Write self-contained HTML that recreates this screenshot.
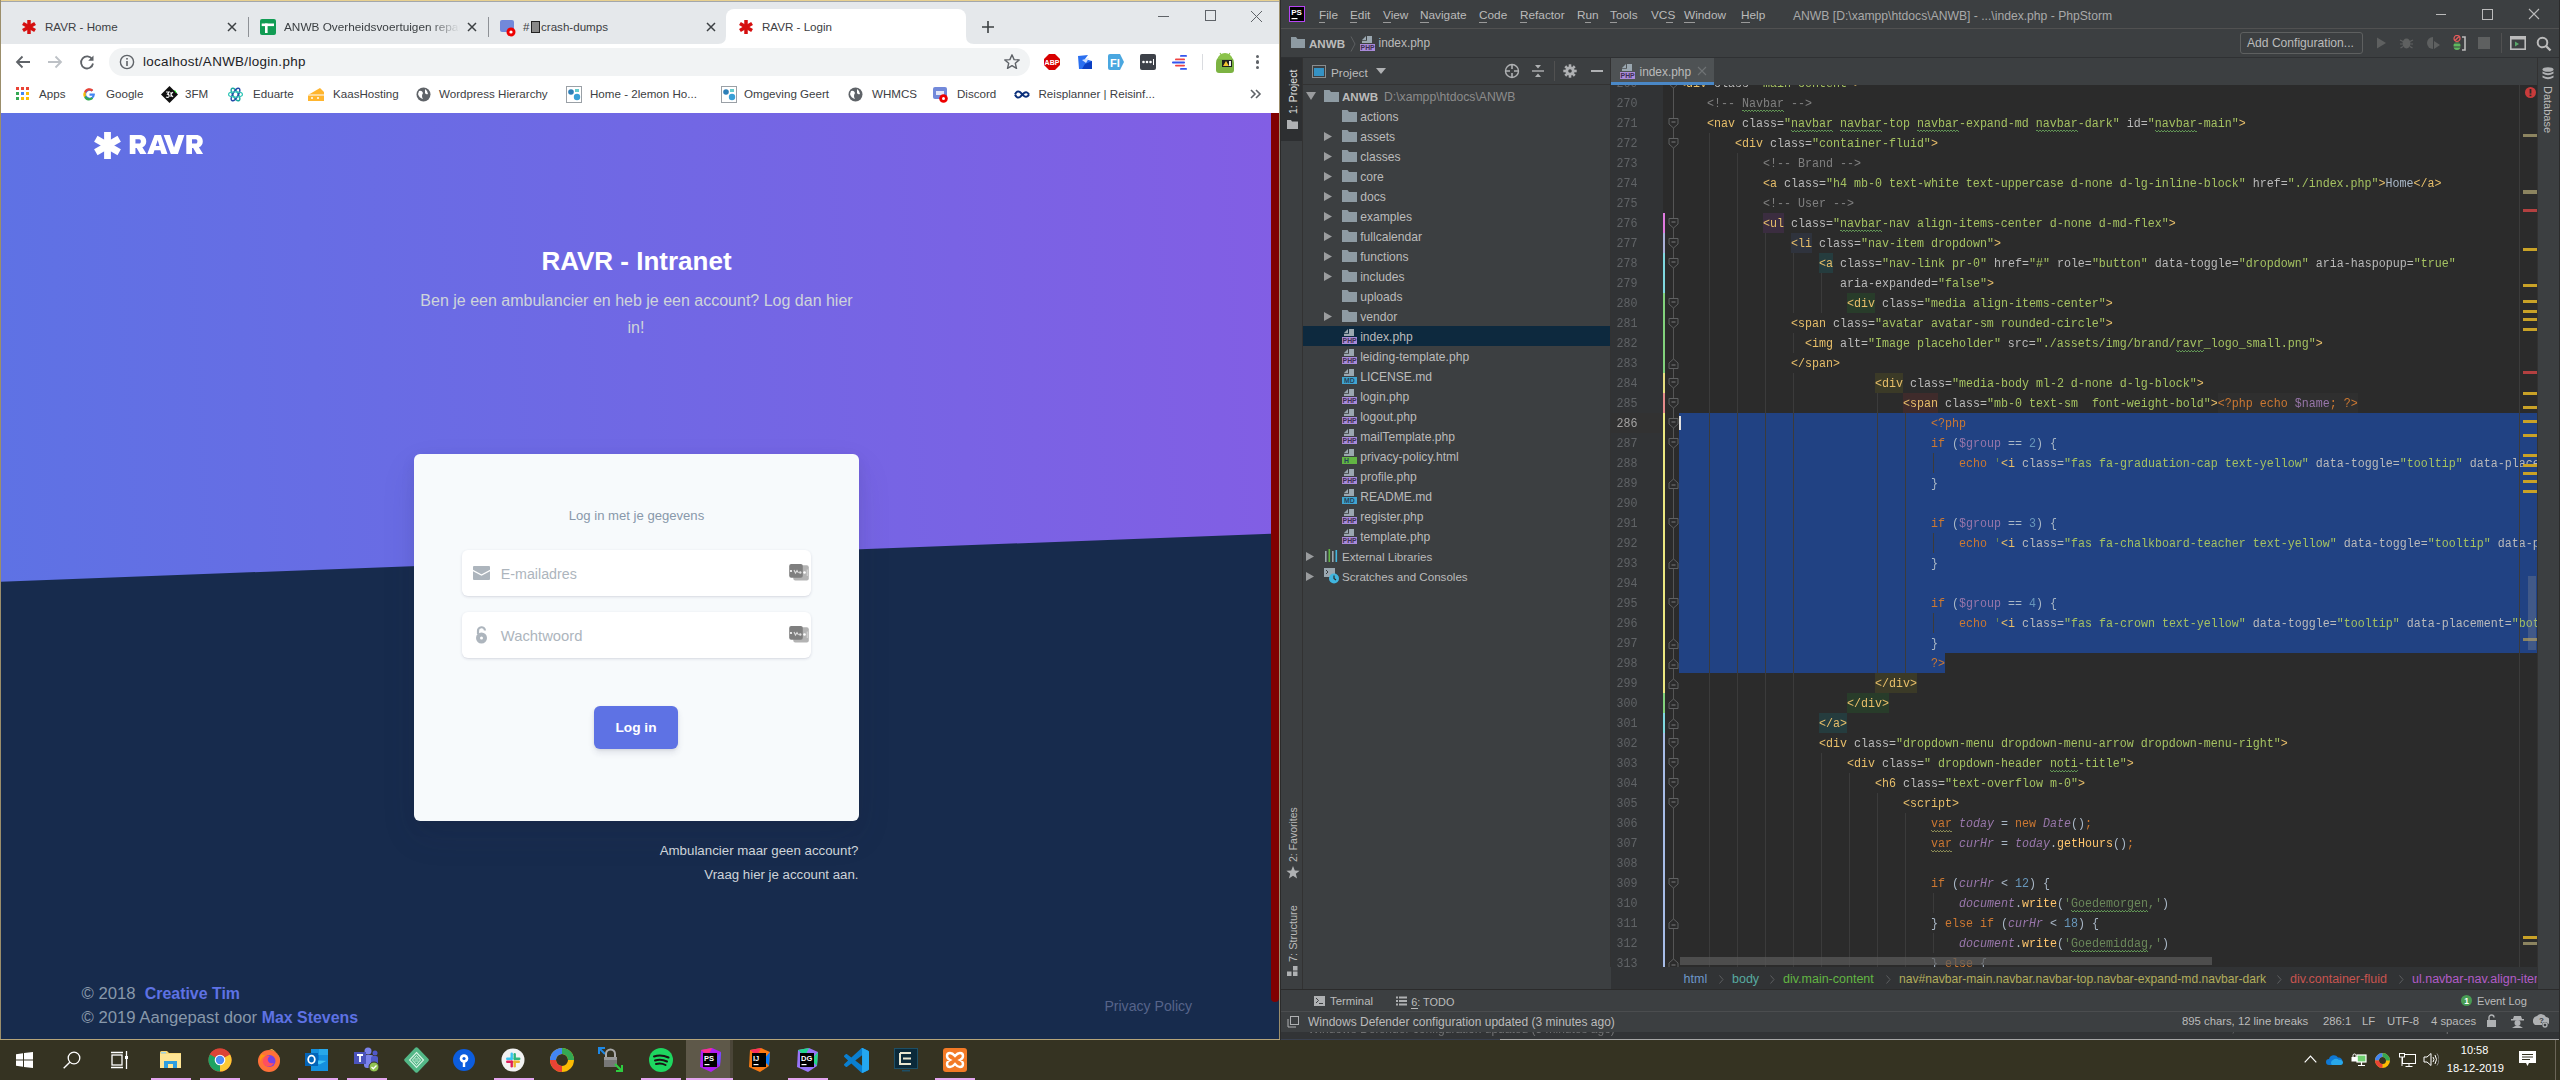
<!DOCTYPE html><html><head><meta charset="utf-8"><style>html,body{margin:0;padding:0;width:2560px;height:1080px;overflow:hidden;position:relative;background:#3a3428}body div{position:absolute}body *{box-sizing:border-box}</style></head><body>
<div style="left:0px;top:0px;width:1280px;height:1040px;background:#e5e8eb;"></div>
<div style="left:0px;top:0px;width:1280px;height:1px;background:#e8d08f;"></div>
<div style="left:1px;top:1px;width:1278px;height:1px;background:#a3a7ab;"></div>
<div style="left:0px;top:0px;width:1px;height:1040px;background:#9b8e6b;"></div>
<div style="left:1279px;top:0px;width:1px;height:1040px;background:#9b8e6b;"></div>
<div style="left:0px;top:1039px;width:1280px;height:1px;background:#b6a57a;"></div>
<div style="left:1px;top:2px;width:1278px;height:42px;background:#e5e8eb;"></div>
<div style="left:1px;top:44px;width:1278px;height:69px;background:#ffffff;"></div>
<svg style="position:absolute;left:22px;top:20px" width="14" height="14" viewBox="-7 -7 14 14"><rect x="-1.75" y="-7" width="3.5" height="14" fill="#d50f0f" transform="rotate(0)"/><rect x="-1.75" y="-7" width="3.5" height="14" fill="#d50f0f" transform="rotate(60)"/><rect x="-1.75" y="-7" width="3.5" height="14" fill="#d50f0f" transform="rotate(120)"/></svg>
<svg style="position:absolute;left:260px;top:19px;" width="16" height="16" viewBox="0 0 16 16"><rect x="0" y="0" width="16" height="16" rx="2" fill="#119c54"/><rect x="1.7" y="4.5" width="12.3" height="2.6" fill="#fff"/><rect x="5" y="4.5" width="2.6" height="9.5" fill="#fff"/></svg>
<svg style="position:absolute;left:499px;top:19px;" width="18" height="18" viewBox="0 0 18 18"><rect x="1" y="1" width="14" height="12" rx="2" fill="#7289da"/><circle cx="12" cy="13" r="4.5" fill="#e00"/><circle cx="12" cy="13" r="1.6" fill="#fff"/></svg>
<div style="left:45px;top:21.18px;font:normal 11.6px/11.6px 'Liberation Sans', sans-serif;color:#3c4043;white-space:pre;">RAVR - Home</div>
<div style="left:284px;top:19px;width:190px;height:16px;overflow:hidden;font:11.8px/16px 'Liberation Sans',sans-serif;color:#3c4043;white-space:pre;-webkit-mask-image:linear-gradient(90deg,#000 145px,transparent 176px)">ANWB Overheidsvoertuigen reparaties</div>
<div style="left:523px;top:21.18px;font:normal 11.6px/11.6px 'Liberation Sans', sans-serif;color:#3c4043;white-space:pre;">#</div>
<div style="left:531px;top:21px;width:9px;height:12px;background:#333;border:1px solid #222;background:#888"></div>
<div style="left:541px;top:21.18px;font:normal 11.6px/11.6px 'Liberation Sans', sans-serif;color:#3c4043;white-space:pre;">crash-dumps</div>
<svg style="position:absolute;left:226px;top:21px;" width="12" height="12" viewBox="0 0 12 12"><path d="M2 2L10 10M10 2L2 10" stroke="#3c4043" stroke-width="1.5"/></svg>
<svg style="position:absolute;left:466px;top:21px;" width="12" height="12" viewBox="0 0 12 12"><path d="M2 2L10 10M10 2L2 10" stroke="#3c4043" stroke-width="1.5"/></svg>
<svg style="position:absolute;left:705px;top:21px;" width="12" height="12" viewBox="0 0 12 12"><path d="M2 2L10 10M10 2L2 10" stroke="#3c4043" stroke-width="1.5"/></svg>
<svg style="position:absolute;left:944px;top:21px;" width="12" height="12" viewBox="0 0 12 12"><path d="M2 2L10 10M10 2L2 10" stroke="#3c4043" stroke-width="1.5"/></svg>
<div style="left:248px;top:17px;width:1px;height:20px;background:#8e9196;"></div>
<div style="left:488px;top:17px;width:1px;height:20px;background:#8e9196;"></div>
<div style="left:726px;top:9px;width:240px;height:36px;background:#fff;border-radius:8px 8px 0 0"></div>
<svg style="position:absolute;left:718px;top:36px;" width="8" height="8" viewBox="0 0 8 8"><path d="M0 8 Q8 8 8 0 L8 8Z" fill="#fff"/></svg>
<svg style="position:absolute;left:966px;top:36px;" width="8" height="8" viewBox="0 0 8 8"><path d="M8 8 Q0 8 0 0 L0 8Z" fill="#fff"/></svg>
<svg style="position:absolute;left:738.5px;top:20px" width="14" height="14" viewBox="-7 -7 14 14"><rect x="-1.75" y="-7" width="3.5" height="14" fill="#d50f0f" transform="rotate(0)"/><rect x="-1.75" y="-7" width="3.5" height="14" fill="#d50f0f" transform="rotate(60)"/><rect x="-1.75" y="-7" width="3.5" height="14" fill="#d50f0f" transform="rotate(120)"/></svg>
<div style="left:762px;top:21.18px;font:normal 11.6px/11.6px 'Liberation Sans', sans-serif;color:#3c4043;white-space:pre;">RAVR - Login</div>
<svg style="position:absolute;left:981px;top:20px;" width="14" height="14" viewBox="0 0 14 14"><path d="M7 1V13M1 7H13" stroke="#3c4043" stroke-width="1.6"/></svg>
<div style="left:1158px;top:16px;width:11px;height:1px;background:#5f6368;"></div>
<div style="left:1205px;top:10px;width:11px;height:11px;background:transparent;border:1px solid #5f6368"></div>
<svg style="position:absolute;left:1250px;top:10px;" width="13" height="13" viewBox="0 0 13 13"><path d="M1 1L12 12M12 1L1 12" stroke="#5f6368" stroke-width="1"/></svg>
<svg style="position:absolute;left:14px;top:54px;" width="18" height="16" viewBox="0 0 18 16"><path d="M16 8H3M8.5 2.5L3 8L8.5 13.5" stroke="#5f6368" stroke-width="1.8" fill="none"/></svg>
<svg style="position:absolute;left:46px;top:54px;" width="18" height="16" viewBox="0 0 18 16"><path d="M2 8H15M9.5 2.5L15 8L9.5 13.5" stroke="#bdc1c6" stroke-width="1.8" fill="none"/></svg>
<svg style="position:absolute;left:79px;top:54px;" width="17" height="17" viewBox="0 0 17 17"><path d="M13.2 5.3A6 6 0 1 0 14 9.5" stroke="#5f6368" stroke-width="1.8" fill="none"/><path d="M14.5 1.5V6.8H9.2Z" fill="#5f6368"/></svg>
<div style="left:109px;top:48px;width:921px;height:28px;background:#f1f3f4;border-radius:14px"></div>
<svg style="position:absolute;left:119px;top:54px;" width="16" height="16" viewBox="0 0 16 16"><circle cx="8" cy="8" r="6.6" stroke="#5f6368" stroke-width="1.4" fill="none"/><rect x="7.2" y="7" width="1.6" height="5" fill="#5f6368"/><rect x="7.2" y="4" width="1.6" height="1.6" fill="#5f6368"/></svg>
<div style="left:143px;top:55.16px;font:normal 13.4px/13.4px 'Liberation Sans', sans-serif;color:#202124;white-space:pre;letter-spacing:0.33px">localhost/ANWB/login.php</div>
<svg style="position:absolute;left:1003px;top:53px;" width="18" height="18" viewBox="0 0 18 18"><path d="M9 1.8L11.1 6.6L16.2 7L12.3 10.3L13.5 15.3L9 12.6L4.5 15.3L5.7 10.3L1.8 7L6.9 6.6Z" stroke="#5f6368" stroke-width="1.4" fill="none" stroke-linejoin="round"/></svg>
<svg style="position:absolute;left:1044px;top:54px;" width="16" height="16" viewBox="0 0 16 16"><path d="M5 0H11L16 5V11L11 16H5L0 11V5Z" fill="#d80000"/><text x="8" y="11" font-family="Liberation Sans" font-weight="bold" font-size="7" fill="#fff" text-anchor="middle">ABP</text></svg>
<svg style="position:absolute;left:1077px;top:54px;" width="16" height="16" viewBox="0 0 16 16"><path d="M1 2L11 1L8 5L15 7V15H2Z" fill="#2a6ff0"/><path d="M5 6L12 4L9 9Z" fill="#cfe0ff"/><path d="M8 10L15 7V15H5Z" fill="#0b3fc2"/></svg>
<svg style="position:absolute;left:1108px;top:54px;" width="17" height="16" viewBox="0 0 17 16"><path d="M0 2Q0 0 2 0H12L16 8L12 16H2Q0 16 0 14Z" fill="#4aa7e0"/><text x="2" y="12.5" font-family="Liberation Sans" font-weight="bold" font-size="11" fill="#fff">FI</text></svg>
<svg style="position:absolute;left:1140px;top:54px;" width="16" height="16" viewBox="0 0 16 16"><rect width="16" height="16" rx="2" fill="#3d4149"/><circle cx="3.5" cy="8" r="1.3" fill="#fff"/><circle cx="7" cy="8" r="1.3" fill="#fff"/><circle cx="10.5" cy="8" r="1.3" fill="#fff"/><rect x="13" y="5" width="1" height="6" fill="#fff"/></svg>
<svg style="position:absolute;left:1172px;top:54px;" width="16" height="16" viewBox="0 0 16 16"><rect x="8" y="1" width="7" height="1.8" rx=".9" fill="#3355ee"/><rect x="3" y="4.5" width="10" height="1.8" rx=".9" fill="#ee4444"/><rect x="0" y="7.6" width="13" height="1.8" rx=".9" fill="#3355ee"/><rect x="3" y="10.7" width="10" height="1.8" rx=".9" fill="#ee4444"/><rect x="8" y="14" width="7" height="1.8" rx=".9" fill="#3355ee"/></svg>
<div style="left:1202px;top:54px;width:1px;height:16px;background:#dadce0;"></div>
<svg style="position:absolute;left:1214px;top:50px;" width="22" height="24" viewBox="0 0 22 24"><path d="M2 13A9 9 0 0 1 20 13V20A3 3 0 0 1 17 23H5A3 3 0 0 1 2 20Z" fill="#7cb342"/><path d="M4 9A7 6 0 0 1 18 9Z" fill="#8bc34a"/><path d="M6 3L8 6M16 3L14 6" stroke="#8bc34a" stroke-width="1.2"/><rect x="8" y="10" width="10" height="7" fill="#1e1e1e"/><path d="M9 16L12 11L15 16Z" fill="#f2c230"/><rect x="15" y="11" width="2" height="5" fill="#eee"/></svg>
<div style="left:1255.5px;top:54.9px;width:3.2px;height:3.2px;border-radius:50%;background:#5f6368"></div>
<div style="left:1255.5px;top:60.4px;width:3.2px;height:3.2px;border-radius:50%;background:#5f6368"></div>
<div style="left:1255.5px;top:65.9px;width:3.2px;height:3.2px;border-radius:50%;background:#5f6368"></div>
<div style="left:16px;top:87px;width:3px;height:3px;background:#ea4335;"></div>
<div style="left:21px;top:87px;width:3px;height:3px;background:#ea4335;"></div>
<div style="left:26px;top:87px;width:3px;height:3px;background:#ea4335;"></div>
<div style="left:16px;top:92px;width:3px;height:3px;background:#34a853;"></div>
<div style="left:21px;top:92px;width:3px;height:3px;background:#4285f4;"></div>
<div style="left:26px;top:92px;width:3px;height:3px;background:#fbbc05;"></div>
<div style="left:16px;top:97px;width:3px;height:3px;background:#34a853;"></div>
<div style="left:21px;top:97px;width:3px;height:3px;background:#fbbc05;"></div>
<div style="left:26px;top:97px;width:3px;height:3px;background:#fbbc05;"></div>
<div style="left:39px;top:87.98px;font:normal 11.6px/11.6px 'Liberation Sans', sans-serif;color:#3c4043;white-space:pre;">Apps</div>
<svg style="position:absolute;left:83px;top:88px;" width="13" height="13" viewBox="0 0 13 13"><path d="M11.8 5.5H6.5V7.7H9.6A3.3 3.3 0 1 1 8.7 3.6L10.2 2.1A5.4 5.4 0 1 0 11.9 6.5Z" fill="#4285f4"/><path d="M1.1 3.7L3 5A3.3 3.3 0 0 1 8.7 3.6L10.2 2.1A5.4 5.4 0 0 0 1.1 3.7Z" fill="#ea4335"/><path d="M1.1 9.3L3 8A3.3 3.3 0 0 1 3 5L1.1 3.7A5.4 5.4 0 0 0 1.1 9.3Z" fill="#fbbc05"/><path d="M1.1 9.3A5.4 5.4 0 0 0 10.2 10.5L8.4 9.2A3.3 3.3 0 0 1 3 8Z" fill="#34a853"/></svg>
<div style="left:106px;top:87.98px;font:normal 11.6px/11.6px 'Liberation Sans', sans-serif;color:#3c4043;white-space:pre;">Google</div>
<svg style="position:absolute;left:161px;top:86px;" width="17" height="17" viewBox="0 0 17 17"><path d="M8.5 0L17 8.5L8.5 17L0 8.5Z" fill="#111"/><path d="M5 6H8L6.5 8.2Q8.5 8.5 8 10.5Q7 12 5 11" stroke="#fff" stroke-width="1.2" fill="none"/><path d="M10 6V11M10 8.5L12 6M10 8.5L12 11" stroke="#fff" stroke-width="1.1" fill="none"/><path d="M13.5 4L15.5 7" stroke="#3f3" stroke-width="1"/></svg>
<div style="left:185px;top:87.98px;font:normal 11.6px/11.6px 'Liberation Sans', sans-serif;color:#3c4043;white-space:pre;">3FM</div>
<svg style="position:absolute;left:228px;top:87px;" width="15" height="15" viewBox="0 0 15 15"><ellipse cx="7.5" cy="7.5" rx="7" ry="2.6" transform="rotate(60 7.5 7.5)" stroke="#1aa9a0" stroke-width="1.5" fill="none"/><ellipse cx="7.5" cy="7.5" rx="7" ry="2.6" transform="rotate(-60 7.5 7.5)" stroke="#2448a8" stroke-width="1.5" fill="none"/><ellipse cx="7.5" cy="7.5" rx="7" ry="2.6" stroke="#35c7b8" stroke-width="1.3" fill="none"/></svg>
<div style="left:253px;top:87.98px;font:normal 11.6px/11.6px 'Liberation Sans', sans-serif;color:#3c4043;white-space:pre;">Eduarte</div>
<svg style="position:absolute;left:307px;top:87px;" width="18" height="15" viewBox="0 0 18 15"><path d="M1 8L13 1L17 5V14H1Z" fill="#ffb52e"/><path d="M1 8H17" stroke="#fff" stroke-width="1"/><circle cx="5" cy="11" r="1" fill="#fff"/><circle cx="11" cy="11" r="1" fill="#fff"/></svg>
<div style="left:333px;top:87.98px;font:normal 11.6px/11.6px 'Liberation Sans', sans-serif;color:#3c4043;white-space:pre;">KaasHosting</div>
<svg style="position:absolute;left:416px;top:87px;" width="15" height="15" viewBox="0 0 15 15"><circle cx="7.5" cy="7.5" r="7" fill="#5f6368"/><path d="M3 4Q6 3 7 6Q5 9 7 12Q3 11 2 7Z M9 2Q12 4 12 7Q10 8 9 6Z" fill="#fff"/></svg>
<div style="left:439px;top:87.98px;font:normal 11.6px/11.6px 'Liberation Sans', sans-serif;color:#3c4043;white-space:pre;">Wordpress Hierarchy</div>
<svg style="position:absolute;left:566px;top:86px;" width="16" height="17" viewBox="0 0 16 17"><rect x="0.5" y="0.5" width="15" height="16" fill="#fff" stroke="#9aa0a6"/><circle cx="5" cy="6" r="2.8" fill="#2d7fb8"/><circle cx="11" cy="11" r="3.2" fill="#39a0d6"/><rect x="9" y="3" width="4" height="3" fill="#6cc"/></svg>
<svg style="position:absolute;left:721px;top:86px;" width="16" height="17" viewBox="0 0 16 17"><rect x="0.5" y="0.5" width="15" height="16" fill="#fff" stroke="#9aa0a6"/><circle cx="5" cy="6" r="2.8" fill="#2d7fb8"/><circle cx="11" cy="11" r="3.2" fill="#39a0d6"/><rect x="9" y="3" width="4" height="3" fill="#6cc"/></svg>
<div style="left:590px;top:87.98px;font:normal 11.6px/11.6px 'Liberation Sans', sans-serif;color:#3c4043;white-space:pre;">Home - 2lemon Ho...</div>
<div style="left:744px;top:87.98px;font:normal 11.6px/11.6px 'Liberation Sans', sans-serif;color:#3c4043;white-space:pre;">Omgeving Geert</div>
<svg style="position:absolute;left:848px;top:87px;" width="15" height="15" viewBox="0 0 15 15"><circle cx="7.5" cy="7.5" r="7" fill="#5f6368"/><path d="M3 4Q6 3 7 6Q5 9 7 12Q3 11 2 7Z M9 2Q12 4 12 7Q10 8 9 6Z" fill="#fff"/></svg>
<div style="left:872px;top:87.98px;font:normal 11.6px/11.6px 'Liberation Sans', sans-serif;color:#3c4043;white-space:pre;">WHMCS</div>
<svg style="position:absolute;left:933px;top:87px;" width="16" height="16" viewBox="0 0 16 16"><rect x="0" y="0" width="14" height="12" rx="2" fill="#7289da"/><path d="M3 4H11V8H3Z" fill="#fff" opacity=".8"/><circle cx="10.5" cy="11.5" r="4.3" fill="#e00"/><circle cx="10.5" cy="11.5" r="1.5" fill="#fff"/></svg>
<div style="left:957px;top:87.98px;font:normal 11.6px/11.6px 'Liberation Sans', sans-serif;color:#3c4043;white-space:pre;">Discord</div>
<svg style="position:absolute;left:1014px;top:89px;" width="16" height="11" viewBox="0 0 16 11"><path d="M1 5.5Q3 1 6 3L10 7Q13 9 15 5.5M1 5.5Q3 10 6 8L10 4Q13 2 15 5.5" stroke="#0a2f7a" stroke-width="2" fill="none"/></svg>
<div style="left:1038.5px;top:87.98px;font:normal 11.6px/11.6px 'Liberation Sans', sans-serif;color:#3c4043;white-space:pre;">Reisplanner | Reisinf...</div>
<svg style="position:absolute;left:1250px;top:89px;" width="12" height="10" viewBox="0 0 12 10"><path d="M1 1L5 5L1 9M6 1L10 5L6 9" stroke="#5f6368" stroke-width="1.6" fill="none"/></svg>
<div style="left:1px;top:113px;width:1270px;height:470px;background:linear-gradient(87deg,#5e72e4 0%,#825ee4 100%)"></div>
<div style="left:1px;top:582px;width:1270px;height:457px;background:#172b4d;"></div>
<svg style="position:absolute;left:1px;top:533px;" width="1270" height="50" viewBox="0 0 1270 50"><polygon points="1270,0.8 1270,50 0,50 0,48.7" fill="#172b4d"/></svg>
<div style="left:1271px;top:113px;width:8px;height:926px;background:#172b4d;"></div>
<div style="left:1271px;top:113px;width:8px;height:889px;background:#800000;border-radius:0 0 4px 4px"></div>
<svg style="position:absolute;left:94px;top:132px" width="27" height="27" viewBox="-13.5 -13.5 27 27"><rect x="-3.4" y="-13.5" width="6.8" height="27" fill="#fff" transform="rotate(0)"/><rect x="-3.4" y="-13.5" width="6.8" height="27" fill="#fff" transform="rotate(60)"/><rect x="-3.4" y="-13.5" width="6.8" height="27" fill="#fff" transform="rotate(120)"/></svg>
<svg style="position:absolute;left:129px;top:135px;" width="76" height="20" viewBox="0 0 76 20"><g fill="#fff" fill-rule="evenodd"><path transform="translate(0.75,0)" d="M0,0 H9.8 C14,0 16.5,2.6 16.5,6.4 C16.5,9.2 15,11.3 12.6,12.3 L16.8,19 H10.4 L6.9,13.1 H5.7 V19 H0 Z M5.7,4.3 H9.4 C10.6,4.3 11.1,5.2 11.1,6.4 C11.1,7.6 10.6,8.6 9.4,8.6 H5.7 Z"/><path transform="translate(18.25,0)" d="M0,19 L7.35,0 H13.65 L20.25,19 H14.3 L13.1,15.2 H7.2 L6,19 Z M8.5,11 L10.45,5 L12.2,11 Z"/><path transform="translate(34.6,0)" d="M0,0 H6.1 L10.45,12.4 L14.7,0 H20.8 L14.3,19 H7.2 Z"/><path transform="translate(57.3,0)" d="M0,0 H9.8 C14,0 16.5,2.6 16.5,6.4 C16.5,9.2 15,11.3 12.6,12.3 L16.8,19 H10.4 L6.9,13.1 H5.7 V19 H0 Z M5.7,4.3 H9.4 C10.6,4.3 11.1,5.2 11.1,6.4 C11.1,7.6 10.6,8.6 9.4,8.6 H5.7 Z"/></g></svg>
<div style="left:136.5px;width:1000px;top:248.29px;font:bold 26px/26px 'Liberation Sans', sans-serif;color:#fff;white-space:pre;text-align:center;">RAVR - Intranet</div>
<div style="left:136.5px;width:1000px;top:293.36px;font:normal 16px/16px 'Liberation Sans', sans-serif;color:#ced4da;white-space:pre;text-align:center;">Ben je een ambulancier en heb je een account? Log dan hier</div>
<div style="left:136px;width:1000px;top:319.96px;font:normal 16px/16px 'Liberation Sans', sans-serif;color:#ced4da;white-space:pre;text-align:center;">in!</div>
<div style="left:414px;top:454px;width:445px;height:367px;background:#f7fafc;border-radius:6px;box-shadow:0 15px 35px rgba(50,50,93,.1),0 5px 15px rgba(0,0,0,.07)"></div>
<div style="left:136.5px;width:1000px;top:508.91px;font:normal 13.1px/13.1px 'Liberation Sans', sans-serif;color:#8898aa;white-space:pre;text-align:center;">Log in met je gegevens</div>
<div style="left:462px;top:550px;width:349px;height:46px;background:#fff;border-radius:6px;box-shadow:0 1px 3px rgba(50,50,93,.15),0 1px 0 rgba(0,0,0,.02)"></div>
<div style="left:500.8px;top:567.14px;font:normal 14.25px/14.25px 'Liberation Sans', sans-serif;color:#adb5bd;white-space:pre;">E-mailadres</div>
<svg style="position:absolute;left:789px;top:563px;" width="21" height="19" viewBox="0 0 21 19"><rect x="4.3" y="2.2" width="15.5" height="15.4" rx="2" fill="#b3b3b3"/><rect x="0.2" y="1" width="13.6" height="13.7" rx="2" fill="#7f7f7f"/><circle cx="2" cy="8" r="1.1" fill="#fff"/><path d="M5 7L6.5 10L8 7.5L9.5 10" stroke="#ddd" stroke-width="1.1" fill="none"/><circle cx="11.3" cy="9.5" r="1.2" fill="#ddd"/><circle cx="15.5" cy="9.5" r="1.3" fill="#fff"/><rect x="17.8" y="6.5" width="0.9" height="6.5" fill="#ddd"/></svg>
<div style="left:462px;top:612px;width:349px;height:46px;background:#fff;border-radius:6px;box-shadow:0 1px 3px rgba(50,50,93,.15),0 1px 0 rgba(0,0,0,.02)"></div>
<div style="left:500.8px;top:628.67px;font:normal 14.8px/14.8px 'Liberation Sans', sans-serif;color:#adb5bd;white-space:pre;">Wachtwoord</div>
<svg style="position:absolute;left:789px;top:625px;" width="21" height="19" viewBox="0 0 21 19"><rect x="4.3" y="2.2" width="15.5" height="15.4" rx="2" fill="#b3b3b3"/><rect x="0.2" y="1" width="13.6" height="13.7" rx="2" fill="#7f7f7f"/><circle cx="2" cy="8" r="1.1" fill="#fff"/><path d="M5 7L6.5 10L8 7.5L9.5 10" stroke="#ddd" stroke-width="1.1" fill="none"/><circle cx="11.3" cy="9.5" r="1.2" fill="#ddd"/><circle cx="15.5" cy="9.5" r="1.3" fill="#fff"/><rect x="17.8" y="6.5" width="0.9" height="6.5" fill="#ddd"/></svg>
<svg style="position:absolute;left:473px;top:566px;" width="17" height="14" viewBox="0 0 17 14"><rect x="0" y="0" width="17" height="14" rx="1" fill="#adb5bd"/><path d="M-0.5 4.2L8.5 9L17.5 4.2" stroke="#fff" stroke-width="1.2" fill="none"/></svg>
<svg style="position:absolute;left:475px;top:626px;" width="13" height="18" viewBox="0 0 13 18"><path d="M3 8V5A3.5 3.5 0 0 1 10 4.5" stroke="#adb5bd" stroke-width="2.2" fill="none"/><circle cx="6.5" cy="12" r="5.5" fill="#adb5bd"/><circle cx="6.5" cy="12" r="1.5" fill="#fff"/></svg>
<div style="left:594px;top:706px;width:84px;height:43px;background:#5e72e4;border-radius:6px;box-shadow:0 4px 6px rgba(50,50,93,.11),0 1px 3px rgba(0,0,0,.08)"></div>
<div style="left:136px;width:1000px;top:721.40px;font:bold 13.7px/13.7px 'Liberation Sans', sans-serif;color:#fff;white-space:pre;text-align:center;">Log in</div>
<div style="right:1701.5px;top:843.54px;font:normal 13.3px/13.3px 'Liberation Sans', sans-serif;color:#ced4da;white-space:pre;text-align:right;">Ambulancier maar geen account?</div>
<div style="right:1701.5px;top:867.68px;font:normal 13.25px/13.25px 'Liberation Sans', sans-serif;color:#ced4da;white-space:pre;text-align:right;">Vraag hier je account aan.</div>
<div style="left:81.5px;top:985.86px;font:16.7px/16.7px 'Liberation Sans',sans-serif;color:#8898aa;white-space:pre">© 2018  <span style="color:#5e72e4;font-weight:bold;font-size:15.9px">Creative Tim</span></div>
<div style="left:81.5px;top:1009.76px;font:16.7px/16.7px 'Liberation Sans',sans-serif;color:#8898aa;white-space:pre">© 2019 Aangepast door <span style="color:#5e72e4;font-weight:bold;font-size:15.9px">Max Stevens</span></div>
<div style="left:1104.4px;top:998.86px;font:normal 14.1px/14.1px 'Liberation Sans', sans-serif;color:#56648a;white-space:pre;">Privacy Policy</div>
<div style="left:1280px;top:0px;width:1280px;height:1040px;background:#3c3f41;"></div>
<div style="left:1280px;top:0px;width:1px;height:1040px;background:#2b2b2b;"></div>
<svg style="position:absolute;left:1289px;top:6px;" width="16" height="16" viewBox="0 0 16 16"><rect x="0.5" y="0.5" width="15" height="15" fill="#000" stroke="#b745f5" stroke-width="1"/><text x="2.2" y="9" font-family="Liberation Sans" font-weight="bold" font-size="8" fill="#fff">PS</text><rect x="2.5" y="12" width="6" height="1.2" fill="#fff"/></svg>
<div style="left:1319px;top:10.01px;font:normal 11.8px/11.8px 'Liberation Sans', sans-serif;color:#bbbbbb;white-space:pre;">File</div>
<div style="left:1350px;top:10.01px;font:normal 11.8px/11.8px 'Liberation Sans', sans-serif;color:#bbbbbb;white-space:pre;">Edit</div>
<div style="left:1383px;top:10.01px;font:normal 11.8px/11.8px 'Liberation Sans', sans-serif;color:#bbbbbb;white-space:pre;">View</div>
<div style="left:1420px;top:10.01px;font:normal 11.8px/11.8px 'Liberation Sans', sans-serif;color:#bbbbbb;white-space:pre;">Navigate</div>
<div style="left:1479px;top:10.01px;font:normal 11.8px/11.8px 'Liberation Sans', sans-serif;color:#bbbbbb;white-space:pre;">Code</div>
<div style="left:1520px;top:10.01px;font:normal 11.8px/11.8px 'Liberation Sans', sans-serif;color:#bbbbbb;white-space:pre;">Refactor</div>
<div style="left:1577px;top:10.01px;font:normal 11.8px/11.8px 'Liberation Sans', sans-serif;color:#bbbbbb;white-space:pre;">Run</div>
<div style="left:1610px;top:10.01px;font:normal 11.8px/11.8px 'Liberation Sans', sans-serif;color:#bbbbbb;white-space:pre;">Tools</div>
<div style="left:1651px;top:10.01px;font:normal 11.8px/11.8px 'Liberation Sans', sans-serif;color:#bbbbbb;white-space:pre;">VCS</div>
<div style="left:1684px;top:10.01px;font:normal 11.8px/11.8px 'Liberation Sans', sans-serif;color:#bbbbbb;white-space:pre;">Window</div>
<div style="left:1741px;top:10.01px;font:normal 11.8px/11.8px 'Liberation Sans', sans-serif;color:#bbbbbb;white-space:pre;">Help</div>
<div style="left:1319px;top:22px;width:6px;height:1px;background:#9a9a9a;"></div>
<div style="left:1350px;top:22px;width:7px;height:1px;background:#9a9a9a;"></div>
<div style="left:1383px;top:22px;width:8px;height:1px;background:#9a9a9a;"></div>
<div style="left:1420px;top:22px;width:9px;height:1px;background:#9a9a9a;"></div>
<div style="left:1479px;top:22px;width:8px;height:1px;background:#9a9a9a;"></div>
<div style="left:1520px;top:22px;width:7px;height:1px;background:#9a9a9a;"></div>
<div style="left:1585px;top:22px;width:6px;height:1px;background:#9a9a9a;"></div>
<div style="left:1610px;top:22px;width:7px;height:1px;background:#9a9a9a;"></div>
<div style="left:1666px;top:22px;width:7px;height:1px;background:#9a9a9a;"></div>
<div style="left:1684px;top:22px;width:11px;height:1px;background:#9a9a9a;"></div>
<div style="left:1741px;top:22px;width:9px;height:1px;background:#9a9a9a;"></div>
<div style="left:1793px;top:9.72px;font:normal 12.15px/12.15px 'Liberation Sans', sans-serif;color:#a9a9a9;white-space:pre;">ANWB [D:\xampp\htdocs\ANWB] - ...\index.php - PhpStorm</div>
<div style="left:2436px;top:14px;width:10px;height:1px;background:#bbbbbb;"></div>
<div style="left:2482px;top:9px;width:11px;height:11px;background:transparent;border:1px solid #bbbbbb"></div>
<svg style="position:absolute;left:2528px;top:8px;" width="12" height="12" viewBox="0 0 12 12"><path d="M1 1L11 11M11 1L1 11" stroke="#bbbbbb" stroke-width="1.1"/></svg>
<div style="left:1281px;top:28px;width:1279px;height:1px;background:#515151;"></div>
<svg style="position:absolute;left:1291px;top:37px;" width="14" height="11" viewBox="0 0 14 11"><path d="M0 0H5L6.5 2H14V11H0Z" fill="#8e9ba3"/></svg>
<div style="left:1309px;top:37.98px;font:bold 11.6px/11.6px 'Liberation Sans', sans-serif;color:#bbbbbb;white-space:pre;">ANWB</div>
<svg style="position:absolute;left:1350px;top:36px;" width="6" height="16" viewBox="0 0 6 16"><path d="M1 0.5L5 8L1 15.5" stroke="#5c5f61" stroke-width="1" fill="none"/></svg>
<svg style="position:absolute;left:1360px;top:36px;" width="16" height="16" viewBox="0 0 16 16"><path d="M7 0H12V7H2V4.8H7Z" fill="#9aa7b0"/><path d="M2 4L6 0V4Z" fill="#9aa7b0"/><rect x="0" y="8" width="15" height="7" fill="#a98ad9"/><text x="0.6" y="14.3" font-family="Liberation Sans" font-weight="bold" font-size="7" fill="#3d2f50" textLength="14" lengthAdjust="spacingAndGlyphs">PHP</text></svg>
<div style="left:1378.5px;top:37.73px;font:normal 11.9px/11.9px 'Liberation Sans', sans-serif;color:#bbbbbb;white-space:pre;">index.php</div>
<div style="left:2240px;top:32px;width:123px;height:22px;border:1px solid #5e6060;border-radius:3px;background:#3c3f41"></div>
<div style="left:2247px;top:37.46px;font:normal 12.1px/12.1px 'Liberation Sans', sans-serif;color:#bbbbbb;white-space:pre;">Add Configuration...</div>
<svg style="position:absolute;left:2374px;top:36px;" width="14" height="14" viewBox="0 0 14 14"><path d="M3 1.5L12 7L3 12.5Z" fill="#5e6060"/></svg>
<svg style="position:absolute;left:2399px;top:35px;" width="15" height="15" viewBox="0 0 15 15"><ellipse cx="7.5" cy="8.5" rx="4" ry="5" fill="#5e6060"/><path d="M1 5L4 6.5M14 5L11 6.5M1 9H3.5M14 9H11.5M1.5 13L4 11.5M13.5 13L11 11.5" stroke="#5e6060" stroke-width="1.2"/></svg>
<svg style="position:absolute;left:2425px;top:35px;" width="16" height="16" viewBox="0 0 16 16"><path d="M8 2A6 6 0 1 0 8 14Z" fill="#5e6060"/><path d="M9 6L15 10L9 14Z" fill="#5e6060"/></svg>
<svg style="position:absolute;left:2451px;top:35px;" width="15" height="16" viewBox="0 0 15 16"><ellipse cx="6" cy="11" rx="3.5" ry="4" fill="#5fb85f"/><path d="M1 8H11M1 12H11" stroke="#3c3f41" stroke-width="1"/><circle cx="6" cy="3.5" r="3" fill="none" stroke="#e55b5b" stroke-width="1.2"/><path d="M4 5.5L8 1.5" stroke="#e55b5b" stroke-width="1.2"/><path d="M11 2H14V15H11" stroke="#bbbbbb" stroke-width="1.6" fill="none"/></svg>
<div style="left:2478px;top:37px;width:12px;height:12px;background:#5e6060;"></div>
<div style="left:2501px;top:33px;width:1px;height:20px;background:#515151;"></div>
<svg style="position:absolute;left:2510px;top:36px;" width="16" height="14" viewBox="0 0 16 14"><rect x="0.8" y="0.8" width="14.4" height="12.4" fill="none" stroke="#bbbbbb" stroke-width="1.6"/><rect x="1" y="1" width="14" height="2.5" fill="#bbbbbb"/><path d="M5 5.5L9 8L5 10.5Z" fill="#59a869"/></svg>
<svg style="position:absolute;left:2536px;top:36px;" width="16" height="16" viewBox="0 0 16 16"><circle cx="6.5" cy="6.5" r="4.8" stroke="#bbbbbb" stroke-width="2" fill="none"/><path d="M10 10L14.5 14.5" stroke="#bbbbbb" stroke-width="2.4"/></svg>
<div style="left:1281px;top:57px;width:1279px;height:1px;background:#2f3133;"></div>
<div style="left:1281px;top:58px;width:21px;height:932px;background:#3c3f41;"></div>
<div style="left:1281px;top:58px;width:21px;height:83px;background:#2d2f31;"></div>
<div style="left:1302px;top:58px;width:1px;height:932px;background:#323232;"></div>
<div style="left:1284px;top:85px;width:60px;height:16px;transform-origin:0 0;transform:translate(0,0) rotate(-90deg);left:1285px;top:114px;font:10.5px/16px 'Liberation Sans', sans-serif;color:#e0e0e0;white-space:pre">1: Project</div>
<svg style="position:absolute;left:1287px;top:120px;" width="11" height="9" viewBox="0 0 11 9"><path d="M0 0H4L5 1.5H11V9H0Z" fill="#afb1b3"/></svg>
<div style="left:1285px;top:862px;transform-origin:0 0;transform:rotate(-90deg);font:10.5px/16px 'Liberation Sans', sans-serif;color:#bbbbbb;white-space:pre">2: Favorites</div>
<svg style="position:absolute;left:1286px;top:866px;" width="14" height="13" viewBox="0 0 14 13"><path d="M7 0L8.8 4.6L13.6 4.8L9.8 7.8L11.1 12.5L7 9.8L2.9 12.5L4.2 7.8L0.4 4.8L5.2 4.6Z" fill="#afb1b3"/></svg>
<div style="left:1285px;top:962px;transform-origin:0 0;transform:rotate(-90deg);font:11px/16px 'Liberation Sans', sans-serif;color:#bbbbbb;white-space:pre">7: Structure</div>
<svg style="position:absolute;left:1287px;top:966px;" width="11" height="10" viewBox="0 0 11 10"><rect x="6" y="0" width="4.5" height="4.5" fill="#afb1b3"/><rect x="0" y="5.5" width="4.5" height="4.5" fill="#afb1b3"/><rect x="6" y="5.5" width="4.5" height="4.5" fill="#afb1b3"/></svg>
<div style="left:1303px;top:58px;width:307px;height:26px;background:#3c3f41;"></div>
<svg style="position:absolute;left:1312px;top:65px;" width="14" height="13" viewBox="0 0 14 13"><rect x="0.5" y="0.5" width="13" height="12" fill="#3c3f41" stroke="#8a8d8f"/><rect x="2" y="3" width="10" height="8" fill="#3592c4"/></svg>
<div style="left:1331px;top:68.01px;font:normal 11.8px/11.8px 'Liberation Sans', sans-serif;color:#bbbbbb;white-space:pre;">Project</div>
<svg style="position:absolute;left:1376px;top:68px;" width="10" height="6" viewBox="0 0 10 6"><path d="M0 0H10L5 6Z" fill="#afb1b3"/></svg>
<svg style="position:absolute;left:1504px;top:63px;" width="16" height="16" viewBox="0 0 16 16"><circle cx="8" cy="8" r="6.5" stroke="#afb1b3" stroke-width="1.4" fill="none"/><path d="M8 1.5V6M8 10V14.5M1.5 8H6M10 8H14.5" stroke="#afb1b3" stroke-width="1.6"/></svg>
<svg style="position:absolute;left:1531px;top:64px;" width="14" height="14" viewBox="0 0 14 14"><path d="M1 7H13" stroke="#afb1b3" stroke-width="1.4"/><path d="M4 1H10L7 4.5Z M4 13H10L7 9.5Z" fill="#afb1b3"/></svg>
<div style="left:1554px;top:61px;width:1px;height:20px;background:#515151;"></div>
<svg style="position:absolute;left:1563px;top:64px;" width="14" height="14" viewBox="0 0 14 14"><circle cx="7" cy="7" r="4.6" fill="#afb1b3"/><circle cx="7" cy="7" r="1.8" fill="#3c3f41"/><rect x="5.7" y="0.3" width="2.6" height="3" fill="#afb1b3" transform="rotate(0 7 7)"/><rect x="5.7" y="0.3" width="2.6" height="3" fill="#afb1b3" transform="rotate(45 7 7)"/><rect x="5.7" y="0.3" width="2.6" height="3" fill="#afb1b3" transform="rotate(90 7 7)"/><rect x="5.7" y="0.3" width="2.6" height="3" fill="#afb1b3" transform="rotate(135 7 7)"/><rect x="5.7" y="0.3" width="2.6" height="3" fill="#afb1b3" transform="rotate(180 7 7)"/><rect x="5.7" y="0.3" width="2.6" height="3" fill="#afb1b3" transform="rotate(225 7 7)"/><rect x="5.7" y="0.3" width="2.6" height="3" fill="#afb1b3" transform="rotate(270 7 7)"/><rect x="5.7" y="0.3" width="2.6" height="3" fill="#afb1b3" transform="rotate(315 7 7)"/></svg>
<div style="left:1591px;top:70px;width:12px;height:2px;background:#afb1b3;"></div>
<div style="left:1303px;top:84px;width:307px;height:1px;background:#323232;"></div>
<div style="left:1306px;top:-0.85px;font:normal 1px/1px 'Liberation Sans', sans-serif;color:#000;white-space:pre;"></div>
<svg style="position:absolute;left:1306px;top:92px;" width="10" height="8" viewBox="0 0 10 8"><path d="M0 0H10L5 8Z" fill="#9a9c9e"/></svg>
<svg style="position:absolute;left:1324px;top:90px;" width="15" height="12" viewBox="0 0 15 12"><path d="M0 0H5.5L7 2H15V12H0Z" fill="#8e9ba3"/></svg>
<div style="left:1342px;top:91.38px;font:bold 11.6px/11.6px 'Liberation Sans', sans-serif;color:#bbbbbb;white-space:pre;">ANWB</div>
<div style="left:1384px;top:90.87px;font:normal 12.2px/12.2px 'Liberation Sans', sans-serif;color:#8c8c8c;white-space:pre;">D:\xampp\htdocs\ANWB</div>
<svg style="position:absolute;left:1342px;top:110px;" width="15" height="12" viewBox="0 0 15 12"><path d="M0 0H5.5L7 2H15V12H0Z" fill="#8e9ba3"/></svg>
<div style="left:1360.2px;top:110.96px;font:normal 12.1px/12.1px 'Liberation Sans', sans-serif;color:#bbbbbb;white-space:pre;">actions</div>
<svg style="position:absolute;left:1324px;top:131.5px;" width="8" height="9" viewBox="0 0 8 9"><path d="M0 0L8 4.5L0 9Z" fill="#9a9c9e"/></svg>
<svg style="position:absolute;left:1342px;top:130px;" width="15" height="12" viewBox="0 0 15 12"><path d="M0 0H5.5L7 2H15V12H0Z" fill="#8e9ba3"/></svg>
<div style="left:1360.2px;top:130.96px;font:normal 12.1px/12.1px 'Liberation Sans', sans-serif;color:#bbbbbb;white-space:pre;">assets</div>
<svg style="position:absolute;left:1324px;top:151.5px;" width="8" height="9" viewBox="0 0 8 9"><path d="M0 0L8 4.5L0 9Z" fill="#9a9c9e"/></svg>
<svg style="position:absolute;left:1342px;top:150px;" width="15" height="12" viewBox="0 0 15 12"><path d="M0 0H5.5L7 2H15V12H0Z" fill="#8e9ba3"/></svg>
<div style="left:1360.2px;top:150.96px;font:normal 12.1px/12.1px 'Liberation Sans', sans-serif;color:#bbbbbb;white-space:pre;">classes</div>
<svg style="position:absolute;left:1324px;top:171.5px;" width="8" height="9" viewBox="0 0 8 9"><path d="M0 0L8 4.5L0 9Z" fill="#9a9c9e"/></svg>
<svg style="position:absolute;left:1342px;top:170px;" width="15" height="12" viewBox="0 0 15 12"><path d="M0 0H5.5L7 2H15V12H0Z" fill="#8e9ba3"/></svg>
<div style="left:1360.2px;top:170.96px;font:normal 12.1px/12.1px 'Liberation Sans', sans-serif;color:#bbbbbb;white-space:pre;">core</div>
<svg style="position:absolute;left:1324px;top:191.5px;" width="8" height="9" viewBox="0 0 8 9"><path d="M0 0L8 4.5L0 9Z" fill="#9a9c9e"/></svg>
<svg style="position:absolute;left:1342px;top:190px;" width="15" height="12" viewBox="0 0 15 12"><path d="M0 0H5.5L7 2H15V12H0Z" fill="#8e9ba3"/></svg>
<div style="left:1360.2px;top:190.96px;font:normal 12.1px/12.1px 'Liberation Sans', sans-serif;color:#bbbbbb;white-space:pre;">docs</div>
<svg style="position:absolute;left:1324px;top:211.5px;" width="8" height="9" viewBox="0 0 8 9"><path d="M0 0L8 4.5L0 9Z" fill="#9a9c9e"/></svg>
<svg style="position:absolute;left:1342px;top:210px;" width="15" height="12" viewBox="0 0 15 12"><path d="M0 0H5.5L7 2H15V12H0Z" fill="#8e9ba3"/></svg>
<div style="left:1360.2px;top:210.96px;font:normal 12.1px/12.1px 'Liberation Sans', sans-serif;color:#bbbbbb;white-space:pre;">examples</div>
<svg style="position:absolute;left:1324px;top:231.5px;" width="8" height="9" viewBox="0 0 8 9"><path d="M0 0L8 4.5L0 9Z" fill="#9a9c9e"/></svg>
<svg style="position:absolute;left:1342px;top:230px;" width="15" height="12" viewBox="0 0 15 12"><path d="M0 0H5.5L7 2H15V12H0Z" fill="#8e9ba3"/></svg>
<div style="left:1360.2px;top:230.96px;font:normal 12.1px/12.1px 'Liberation Sans', sans-serif;color:#bbbbbb;white-space:pre;">fullcalendar</div>
<svg style="position:absolute;left:1324px;top:251.5px;" width="8" height="9" viewBox="0 0 8 9"><path d="M0 0L8 4.5L0 9Z" fill="#9a9c9e"/></svg>
<svg style="position:absolute;left:1342px;top:250px;" width="15" height="12" viewBox="0 0 15 12"><path d="M0 0H5.5L7 2H15V12H0Z" fill="#8e9ba3"/></svg>
<div style="left:1360.2px;top:250.96px;font:normal 12.1px/12.1px 'Liberation Sans', sans-serif;color:#bbbbbb;white-space:pre;">functions</div>
<svg style="position:absolute;left:1324px;top:271.5px;" width="8" height="9" viewBox="0 0 8 9"><path d="M0 0L8 4.5L0 9Z" fill="#9a9c9e"/></svg>
<svg style="position:absolute;left:1342px;top:270px;" width="15" height="12" viewBox="0 0 15 12"><path d="M0 0H5.5L7 2H15V12H0Z" fill="#8e9ba3"/></svg>
<div style="left:1360.2px;top:270.96px;font:normal 12.1px/12.1px 'Liberation Sans', sans-serif;color:#bbbbbb;white-space:pre;">includes</div>
<svg style="position:absolute;left:1342px;top:290px;" width="15" height="12" viewBox="0 0 15 12"><path d="M0 0H5.5L7 2H15V12H0Z" fill="#8e9ba3"/></svg>
<div style="left:1360.2px;top:290.96px;font:normal 12.1px/12.1px 'Liberation Sans', sans-serif;color:#bbbbbb;white-space:pre;">uploads</div>
<svg style="position:absolute;left:1324px;top:311.5px;" width="8" height="9" viewBox="0 0 8 9"><path d="M0 0L8 4.5L0 9Z" fill="#9a9c9e"/></svg>
<svg style="position:absolute;left:1342px;top:310px;" width="15" height="12" viewBox="0 0 15 12"><path d="M0 0H5.5L7 2H15V12H0Z" fill="#8e9ba3"/></svg>
<div style="left:1360.2px;top:310.96px;font:normal 12.1px/12.1px 'Liberation Sans', sans-serif;color:#bbbbbb;white-space:pre;">vendor</div>
<div style="left:1303px;top:326px;width:307px;height:20px;background:#0d293e;"></div>
<svg style="position:absolute;left:1342px;top:329px;" width="16" height="16" viewBox="0 0 16 16"><path d="M7 0H12V7H2V4.8H7Z" fill="#9aa7b0"/><path d="M2 4L6 0V4Z" fill="#9aa7b0"/><rect x="0" y="8" width="15" height="7" fill="#a98ad9"/><text x="0.6" y="14.3" font-family="Liberation Sans" font-weight="bold" font-size="7" fill="#3d2f50" textLength="14" lengthAdjust="spacingAndGlyphs">PHP</text></svg>
<div style="left:1360.2px;top:330.96px;font:normal 12.1px/12.1px 'Liberation Sans', sans-serif;color:#bbbbbb;white-space:pre;">index.php</div>
<svg style="position:absolute;left:1342px;top:349px;" width="16" height="16" viewBox="0 0 16 16"><path d="M7 0H12V7H2V4.8H7Z" fill="#9aa7b0"/><path d="M2 4L6 0V4Z" fill="#9aa7b0"/><rect x="0" y="8" width="15" height="7" fill="#a98ad9"/><text x="0.6" y="14.3" font-family="Liberation Sans" font-weight="bold" font-size="7" fill="#3d2f50" textLength="14" lengthAdjust="spacingAndGlyphs">PHP</text></svg>
<div style="left:1360.2px;top:350.96px;font:normal 12.1px/12.1px 'Liberation Sans', sans-serif;color:#bbbbbb;white-space:pre;">leiding-template.php</div>
<svg style="position:absolute;left:1342px;top:369px;" width="16" height="16" viewBox="0 0 16 16"><path d="M7 0H12V7H2V4.8H7Z" fill="#9aa7b0"/><path d="M2 4L6 0V4Z" fill="#9aa7b0"/><rect x="0" y="8" width="15" height="7" fill="#40a4d0"/><text x="2" y="14.3" font-family="Liberation Sans" font-weight="bold" font-size="6.8" fill="#23425a">MD</text></svg>
<div style="left:1360.2px;top:370.96px;font:normal 12.1px/12.1px 'Liberation Sans', sans-serif;color:#bbbbbb;white-space:pre;">LICENSE.md</div>
<svg style="position:absolute;left:1342px;top:389px;" width="16" height="16" viewBox="0 0 16 16"><path d="M7 0H12V7H2V4.8H7Z" fill="#9aa7b0"/><path d="M2 4L6 0V4Z" fill="#9aa7b0"/><rect x="0" y="8" width="15" height="7" fill="#a98ad9"/><text x="0.6" y="14.3" font-family="Liberation Sans" font-weight="bold" font-size="7" fill="#3d2f50" textLength="14" lengthAdjust="spacingAndGlyphs">PHP</text></svg>
<div style="left:1360.2px;top:390.96px;font:normal 12.1px/12.1px 'Liberation Sans', sans-serif;color:#bbbbbb;white-space:pre;">login.php</div>
<svg style="position:absolute;left:1342px;top:409px;" width="16" height="16" viewBox="0 0 16 16"><path d="M7 0H12V7H2V4.8H7Z" fill="#9aa7b0"/><path d="M2 4L6 0V4Z" fill="#9aa7b0"/><rect x="0" y="8" width="15" height="7" fill="#a98ad9"/><text x="0.6" y="14.3" font-family="Liberation Sans" font-weight="bold" font-size="7" fill="#3d2f50" textLength="14" lengthAdjust="spacingAndGlyphs">PHP</text></svg>
<div style="left:1360.2px;top:410.96px;font:normal 12.1px/12.1px 'Liberation Sans', sans-serif;color:#bbbbbb;white-space:pre;">logout.php</div>
<svg style="position:absolute;left:1342px;top:429px;" width="16" height="16" viewBox="0 0 16 16"><path d="M7 0H12V7H2V4.8H7Z" fill="#9aa7b0"/><path d="M2 4L6 0V4Z" fill="#9aa7b0"/><rect x="0" y="8" width="15" height="7" fill="#a98ad9"/><text x="0.6" y="14.3" font-family="Liberation Sans" font-weight="bold" font-size="7" fill="#3d2f50" textLength="14" lengthAdjust="spacingAndGlyphs">PHP</text></svg>
<div style="left:1360.2px;top:430.96px;font:normal 12.1px/12.1px 'Liberation Sans', sans-serif;color:#bbbbbb;white-space:pre;">mailTemplate.php</div>
<svg style="position:absolute;left:1342px;top:449px;" width="16" height="16" viewBox="0 0 16 16"><path d="M7 0H12V7H2V4.8H7Z" fill="#9aa7b0"/><path d="M2 4L6 0V4Z" fill="#9aa7b0"/><rect x="0" y="8" width="15" height="7" fill="#62b543"/><text x="2" y="14.3" font-family="Liberation Sans" font-weight="bold" font-size="6.8" fill="#23425a">H</text></svg>
<div style="left:1360.2px;top:450.96px;font:normal 12.1px/12.1px 'Liberation Sans', sans-serif;color:#bbbbbb;white-space:pre;">privacy-policy.html</div>
<svg style="position:absolute;left:1342px;top:469px;" width="16" height="16" viewBox="0 0 16 16"><path d="M7 0H12V7H2V4.8H7Z" fill="#9aa7b0"/><path d="M2 4L6 0V4Z" fill="#9aa7b0"/><rect x="0" y="8" width="15" height="7" fill="#a98ad9"/><text x="0.6" y="14.3" font-family="Liberation Sans" font-weight="bold" font-size="7" fill="#3d2f50" textLength="14" lengthAdjust="spacingAndGlyphs">PHP</text></svg>
<div style="left:1360.2px;top:470.96px;font:normal 12.1px/12.1px 'Liberation Sans', sans-serif;color:#bbbbbb;white-space:pre;">profile.php</div>
<svg style="position:absolute;left:1342px;top:489px;" width="16" height="16" viewBox="0 0 16 16"><path d="M7 0H12V7H2V4.8H7Z" fill="#9aa7b0"/><path d="M2 4L6 0V4Z" fill="#9aa7b0"/><rect x="0" y="8" width="15" height="7" fill="#40a4d0"/><text x="2" y="14.3" font-family="Liberation Sans" font-weight="bold" font-size="6.8" fill="#23425a">MD</text></svg>
<div style="left:1360.2px;top:490.96px;font:normal 12.1px/12.1px 'Liberation Sans', sans-serif;color:#bbbbbb;white-space:pre;">README.md</div>
<svg style="position:absolute;left:1342px;top:509px;" width="16" height="16" viewBox="0 0 16 16"><path d="M7 0H12V7H2V4.8H7Z" fill="#9aa7b0"/><path d="M2 4L6 0V4Z" fill="#9aa7b0"/><rect x="0" y="8" width="15" height="7" fill="#a98ad9"/><text x="0.6" y="14.3" font-family="Liberation Sans" font-weight="bold" font-size="7" fill="#3d2f50" textLength="14" lengthAdjust="spacingAndGlyphs">PHP</text></svg>
<div style="left:1360.2px;top:510.96px;font:normal 12.1px/12.1px 'Liberation Sans', sans-serif;color:#bbbbbb;white-space:pre;">register.php</div>
<svg style="position:absolute;left:1342px;top:529px;" width="16" height="16" viewBox="0 0 16 16"><path d="M7 0H12V7H2V4.8H7Z" fill="#9aa7b0"/><path d="M2 4L6 0V4Z" fill="#9aa7b0"/><rect x="0" y="8" width="15" height="7" fill="#a98ad9"/><text x="0.6" y="14.3" font-family="Liberation Sans" font-weight="bold" font-size="7" fill="#3d2f50" textLength="14" lengthAdjust="spacingAndGlyphs">PHP</text></svg>
<div style="left:1360.2px;top:530.96px;font:normal 12.1px/12.1px 'Liberation Sans', sans-serif;color:#bbbbbb;white-space:pre;">template.php</div>
<svg style="position:absolute;left:1306px;top:551.5px;" width="8" height="9" viewBox="0 0 8 9"><path d="M0 0L8 4.5L0 9Z" fill="#9a9c9e"/></svg>
<svg style="position:absolute;left:1324px;top:549px;" width="15" height="14" viewBox="0 0 15 14"><rect x="1" y="2" width="1.6" height="11" fill="#9aa7b0"/><rect x="4.5" y="0" width="1.6" height="13" fill="#62b543"/><rect x="8" y="2" width="1.6" height="11" fill="#9aa7b0"/><rect x="11.5" y="1" width="1.6" height="12" fill="#40b6e0"/></svg>
<div style="left:1342px;top:551.38px;font:normal 11.6px/11.6px 'Liberation Sans', sans-serif;color:#bbbbbb;white-space:pre;">External Libraries</div>
<svg style="position:absolute;left:1306px;top:571.5px;" width="8" height="9" viewBox="0 0 8 9"><path d="M0 0L8 4.5L0 9Z" fill="#9a9c9e"/></svg>
<svg style="position:absolute;left:1324px;top:568px;" width="16" height="16" viewBox="0 0 16 16"><path d="M0 0H11V9H0Z" fill="#9aa7b0"/><path d="M2 2L4 4L2 6" stroke="#3c3f41" stroke-width="1" fill="none"/><circle cx="10" cy="10.5" r="5" fill="#40b6e0"/><path d="M10 7.5V10.5L12 12" stroke="#2b2b2b" stroke-width="1.2" fill="none"/></svg>
<div style="left:1342px;top:571.38px;font:normal 11.6px/11.6px 'Liberation Sans', sans-serif;color:#bbbbbb;white-space:pre;">Scratches and Consoles</div>
<div style="left:1611px;top:85px;width:926px;height:882px;background:#2b2b2b;"></div>
<div style="left:1611px;top:85px;width:52px;height:882px;background:#313335;"></div>
<div style="left:1611px;top:413px;width:52px;height:20px;background:#323232;"></div>
<div style="left:1679px;top:413px;width:858px;height:20px;background:#214283;"></div>
<div style="left:1679px;top:433px;width:858px;height:20px;background:#214283;"></div>
<div style="left:1679px;top:453px;width:858px;height:20px;background:#214283;"></div>
<div style="left:1679px;top:473px;width:858px;height:20px;background:#214283;"></div>
<div style="left:1679px;top:493px;width:858px;height:20px;background:#214283;"></div>
<div style="left:1679px;top:513px;width:858px;height:20px;background:#214283;"></div>
<div style="left:1679px;top:533px;width:858px;height:20px;background:#214283;"></div>
<div style="left:1679px;top:553px;width:858px;height:20px;background:#214283;"></div>
<div style="left:1679px;top:573px;width:858px;height:20px;background:#214283;"></div>
<div style="left:1679px;top:593px;width:858px;height:20px;background:#214283;"></div>
<div style="left:1679px;top:613px;width:858px;height:20px;background:#214283;"></div>
<div style="left:1679px;top:633px;width:858px;height:20px;background:#214283;"></div>
<div style="left:1679px;top:653px;width:266px;height:20px;background:#214283;"></div>
<div style="left:1763px;top:213px;width:21px;height:20px;background:#3b2d40;"></div>
<div style="left:1791px;top:233px;width:21px;height:20px;background:#2f333d;"></div>
<div style="left:1819px;top:253px;width:14px;height:20px;background:#253c3e;"></div>
<div style="left:1847px;top:293px;width:28px;height:20px;background:#283c2a;"></div>
<div style="left:1875px;top:373px;width:28px;height:20px;background:#3b3a27;"></div>
<div style="left:1903px;top:393px;width:35px;height:20px;background:#3f2b2b;"></div>
<div style="left:1875px;top:673px;width:42px;height:20px;background:#3b3a27;"></div>
<div style="left:1847px;top:693px;width:42px;height:20px;background:#283c2a;"></div>
<div style="left:1819px;top:713px;width:28px;height:20px;background:#253c3e;"></div>
<div style="left:2218px;top:393px;width:140px;height:20px;background:#2f2f2f;"></div>
<div style="left:1709px;top:133px;width:1px;height:834px;background:#3b3b3b;"></div>
<div style="left:1737px;top:153px;width:1px;height:814px;background:#3b3b3b;"></div>
<div style="left:1765px;top:233px;width:1px;height:734px;background:#3b3b3b;"></div>
<div style="left:1793px;top:253px;width:1px;height:60px;background:#3b3b3b;"></div>
<div style="left:1793px;top:333px;width:1px;height:20px;background:#3b3b3b;"></div>
<div style="left:1793px;top:373px;width:1px;height:594px;background:#3b3b3b;"></div>
<div style="left:1821px;top:273px;width:1px;height:40px;background:#3b3b3b;"></div>
<div style="left:1821px;top:753px;width:1px;height:214px;background:#3b3b3b;"></div>
<div style="left:1849px;top:773px;width:1px;height:194px;background:#3b3b3b;"></div>
<div style="left:1877px;top:393px;width:1px;height:280px;background:#3b3b3b;"></div>
<div style="left:1877px;top:793px;width:1px;height:174px;background:#3b3b3b;"></div>
<div style="left:1905px;top:413px;width:1px;height:260px;background:#3b3b3b;"></div>
<div style="left:1905px;top:813px;width:1px;height:154px;background:#3b3b3b;"></div>
<div style="left:1933px;top:453px;width:1px;height:20px;background:#3b3b3b;"></div>
<div style="left:1933px;top:533px;width:1px;height:20px;background:#3b3b3b;"></div>
<div style="left:1933px;top:613px;width:1px;height:20px;background:#3b3b3b;"></div>
<div style="left:1933px;top:893px;width:1px;height:20px;background:#3b3b3b;"></div>
<div style="left:1933px;top:933px;width:1px;height:20px;background:#3b3b3b;"></div>
<div style="left:1663px;top:213px;width:2px;height:20px;background:#e07ae0;"></div>
<div style="left:1663px;top:233px;width:2px;height:20px;background:#a9b0d8;"></div>
<div style="left:1663px;top:253px;width:2px;height:40px;background:#7fd8e0;"></div>
<div style="left:1663px;top:293px;width:2px;height:80px;background:#82d27c;"></div>
<div style="left:1663px;top:373px;width:2px;height:20px;background:#e6df80;"></div>
<div style="left:1663px;top:393px;width:2px;height:20px;background:#e58b8b;"></div>
<div style="left:1663px;top:413px;width:2px;height:280px;background:#ece880;"></div>
<div style="left:1663px;top:693px;width:2px;height:20px;background:#82d27c;"></div>
<div style="left:1663px;top:713px;width:2px;height:20px;background:#7fd8e0;"></div>
<div style="left:1663px;top:733px;width:2px;height:240px;background:#a7bde8;"></div>
<div style="left:1673px;top:85px;width:1px;height:882px;background:#555555;"></div>
<svg style="position:absolute;left:1668px;top:78px;" width="11" height="11" viewBox="0 0 11 11"><path d="M1 0.5H10V6L5.5 10L1 6Z" fill="#2b2b2b" stroke="#5f6061" stroke-width="1"/><path d="M3.5 4H7.5" stroke="#7a7b7c" stroke-width="1"/></svg>
<svg style="position:absolute;left:1668px;top:118px;" width="11" height="11" viewBox="0 0 11 11"><path d="M1 0.5H10V6L5.5 10L1 6Z" fill="#2b2b2b" stroke="#5f6061" stroke-width="1"/><path d="M3.5 4H7.5" stroke="#7a7b7c" stroke-width="1"/></svg>
<svg style="position:absolute;left:1668px;top:138px;" width="11" height="11" viewBox="0 0 11 11"><path d="M1 0.5H10V6L5.5 10L1 6Z" fill="#2b2b2b" stroke="#5f6061" stroke-width="1"/><path d="M3.5 4H7.5" stroke="#7a7b7c" stroke-width="1"/></svg>
<svg style="position:absolute;left:1668px;top:218px;" width="11" height="11" viewBox="0 0 11 11"><path d="M1 0.5H10V6L5.5 10L1 6Z" fill="#2b2b2b" stroke="#5f6061" stroke-width="1"/><path d="M3.5 4H7.5" stroke="#7a7b7c" stroke-width="1"/></svg>
<svg style="position:absolute;left:1668px;top:238px;" width="11" height="11" viewBox="0 0 11 11"><path d="M1 0.5H10V6L5.5 10L1 6Z" fill="#2b2b2b" stroke="#5f6061" stroke-width="1"/><path d="M3.5 4H7.5" stroke="#7a7b7c" stroke-width="1"/></svg>
<svg style="position:absolute;left:1668px;top:258px;" width="11" height="11" viewBox="0 0 11 11"><path d="M1 0.5H10V6L5.5 10L1 6Z" fill="#2b2b2b" stroke="#5f6061" stroke-width="1"/><path d="M3.5 4H7.5" stroke="#7a7b7c" stroke-width="1"/></svg>
<svg style="position:absolute;left:1668px;top:298px;" width="11" height="11" viewBox="0 0 11 11"><path d="M1 0.5H10V6L5.5 10L1 6Z" fill="#2b2b2b" stroke="#5f6061" stroke-width="1"/><path d="M3.5 4H7.5" stroke="#7a7b7c" stroke-width="1"/></svg>
<svg style="position:absolute;left:1668px;top:318px;" width="11" height="11" viewBox="0 0 11 11"><path d="M1 0.5H10V6L5.5 10L1 6Z" fill="#2b2b2b" stroke="#5f6061" stroke-width="1"/><path d="M3.5 4H7.5" stroke="#7a7b7c" stroke-width="1"/></svg>
<svg style="position:absolute;left:1668px;top:378px;" width="11" height="11" viewBox="0 0 11 11"><path d="M1 0.5H10V6L5.5 10L1 6Z" fill="#2b2b2b" stroke="#5f6061" stroke-width="1"/><path d="M3.5 4H7.5" stroke="#7a7b7c" stroke-width="1"/></svg>
<svg style="position:absolute;left:1668px;top:398px;" width="11" height="11" viewBox="0 0 11 11"><path d="M1 0.5H10V6L5.5 10L1 6Z" fill="#2b2b2b" stroke="#5f6061" stroke-width="1"/><path d="M3.5 4H7.5" stroke="#7a7b7c" stroke-width="1"/></svg>
<svg style="position:absolute;left:1668px;top:418px;" width="11" height="11" viewBox="0 0 11 11"><path d="M1 0.5H10V6L5.5 10L1 6Z" fill="#2b2b2b" stroke="#5f6061" stroke-width="1"/><path d="M3.5 4H7.5" stroke="#7a7b7c" stroke-width="1"/></svg>
<svg style="position:absolute;left:1668px;top:438px;" width="11" height="11" viewBox="0 0 11 11"><path d="M1 0.5H10V6L5.5 10L1 6Z" fill="#2b2b2b" stroke="#5f6061" stroke-width="1"/><path d="M3.5 4H7.5" stroke="#7a7b7c" stroke-width="1"/></svg>
<svg style="position:absolute;left:1668px;top:518px;" width="11" height="11" viewBox="0 0 11 11"><path d="M1 0.5H10V6L5.5 10L1 6Z" fill="#2b2b2b" stroke="#5f6061" stroke-width="1"/><path d="M3.5 4H7.5" stroke="#7a7b7c" stroke-width="1"/></svg>
<svg style="position:absolute;left:1668px;top:598px;" width="11" height="11" viewBox="0 0 11 11"><path d="M1 0.5H10V6L5.5 10L1 6Z" fill="#2b2b2b" stroke="#5f6061" stroke-width="1"/><path d="M3.5 4H7.5" stroke="#7a7b7c" stroke-width="1"/></svg>
<svg style="position:absolute;left:1668px;top:738px;" width="11" height="11" viewBox="0 0 11 11"><path d="M1 0.5H10V6L5.5 10L1 6Z" fill="#2b2b2b" stroke="#5f6061" stroke-width="1"/><path d="M3.5 4H7.5" stroke="#7a7b7c" stroke-width="1"/></svg>
<svg style="position:absolute;left:1668px;top:758px;" width="11" height="11" viewBox="0 0 11 11"><path d="M1 0.5H10V6L5.5 10L1 6Z" fill="#2b2b2b" stroke="#5f6061" stroke-width="1"/><path d="M3.5 4H7.5" stroke="#7a7b7c" stroke-width="1"/></svg>
<svg style="position:absolute;left:1668px;top:778px;" width="11" height="11" viewBox="0 0 11 11"><path d="M1 0.5H10V6L5.5 10L1 6Z" fill="#2b2b2b" stroke="#5f6061" stroke-width="1"/><path d="M3.5 4H7.5" stroke="#7a7b7c" stroke-width="1"/></svg>
<svg style="position:absolute;left:1668px;top:798px;" width="11" height="11" viewBox="0 0 11 11"><path d="M1 0.5H10V6L5.5 10L1 6Z" fill="#2b2b2b" stroke="#5f6061" stroke-width="1"/><path d="M3.5 4H7.5" stroke="#7a7b7c" stroke-width="1"/></svg>
<svg style="position:absolute;left:1668px;top:878px;" width="11" height="11" viewBox="0 0 11 11"><path d="M1 0.5H10V6L5.5 10L1 6Z" fill="#2b2b2b" stroke="#5f6061" stroke-width="1"/><path d="M3.5 4H7.5" stroke="#7a7b7c" stroke-width="1"/></svg>
<svg style="position:absolute;left:1668px;top:358px;" width="11" height="11" viewBox="0 0 11 11"><path d="M1 10.5H10V5L5.5 1L1 5Z" fill="#2b2b2b" stroke="#5f6061" stroke-width="1"/><path d="M3.5 7H7.5" stroke="#7a7b7c" stroke-width="1"/></svg>
<svg style="position:absolute;left:1668px;top:478px;" width="11" height="11" viewBox="0 0 11 11"><path d="M1 10.5H10V5L5.5 1L1 5Z" fill="#2b2b2b" stroke="#5f6061" stroke-width="1"/><path d="M3.5 7H7.5" stroke="#7a7b7c" stroke-width="1"/></svg>
<svg style="position:absolute;left:1668px;top:558px;" width="11" height="11" viewBox="0 0 11 11"><path d="M1 10.5H10V5L5.5 1L1 5Z" fill="#2b2b2b" stroke="#5f6061" stroke-width="1"/><path d="M3.5 7H7.5" stroke="#7a7b7c" stroke-width="1"/></svg>
<svg style="position:absolute;left:1668px;top:638px;" width="11" height="11" viewBox="0 0 11 11"><path d="M1 10.5H10V5L5.5 1L1 5Z" fill="#2b2b2b" stroke="#5f6061" stroke-width="1"/><path d="M3.5 7H7.5" stroke="#7a7b7c" stroke-width="1"/></svg>
<svg style="position:absolute;left:1668px;top:658px;" width="11" height="11" viewBox="0 0 11 11"><path d="M1 10.5H10V5L5.5 1L1 5Z" fill="#2b2b2b" stroke="#5f6061" stroke-width="1"/><path d="M3.5 7H7.5" stroke="#7a7b7c" stroke-width="1"/></svg>
<svg style="position:absolute;left:1668px;top:678px;" width="11" height="11" viewBox="0 0 11 11"><path d="M1 10.5H10V5L5.5 1L1 5Z" fill="#2b2b2b" stroke="#5f6061" stroke-width="1"/><path d="M3.5 7H7.5" stroke="#7a7b7c" stroke-width="1"/></svg>
<svg style="position:absolute;left:1668px;top:698px;" width="11" height="11" viewBox="0 0 11 11"><path d="M1 10.5H10V5L5.5 1L1 5Z" fill="#2b2b2b" stroke="#5f6061" stroke-width="1"/><path d="M3.5 7H7.5" stroke="#7a7b7c" stroke-width="1"/></svg>
<svg style="position:absolute;left:1668px;top:718px;" width="11" height="11" viewBox="0 0 11 11"><path d="M1 10.5H10V5L5.5 1L1 5Z" fill="#2b2b2b" stroke="#5f6061" stroke-width="1"/><path d="M3.5 7H7.5" stroke="#7a7b7c" stroke-width="1"/></svg>
<svg style="position:absolute;left:1668px;top:918px;" width="11" height="11" viewBox="0 0 11 11"><path d="M1 10.5H10V5L5.5 1L1 5Z" fill="#2b2b2b" stroke="#5f6061" stroke-width="1"/><path d="M3.5 7H7.5" stroke="#7a7b7c" stroke-width="1"/></svg>
<svg style="position:absolute;left:1668px;top:958px;" width="11" height="11" viewBox="0 0 11 11"><path d="M1 10.5H10V5L5.5 1L1 5Z" fill="#2b2b2b" stroke="#5f6061" stroke-width="1"/><path d="M3.5 7H7.5" stroke="#7a7b7c" stroke-width="1"/></svg>
<div style="left:1611px;top:58px;width:926px;height:27px;background:#3c3f41;"></div>
<div style="left:1610px;top:58px;width:1px;height:909px;background:#323232;"></div>
<div style="left:1611px;top:58px;width:103px;height:27px;background:#4e5254;"></div>
<div style="left:1611px;top:82px;width:103px;height:3px;background:#4a88c7;"></div>
<svg style="position:absolute;left:1620px;top:64px;" width="16" height="16" viewBox="0 0 16 16"><path d="M7 0H12V7H2V4.8H7Z" fill="#9aa7b0"/><path d="M2 4L6 0V4Z" fill="#9aa7b0"/><rect x="0" y="8" width="15" height="7" fill="#a98ad9"/><text x="0.6" y="14.3" font-family="Liberation Sans" font-weight="bold" font-size="7" fill="#3d2f50" textLength="14" lengthAdjust="spacingAndGlyphs">PHP</text></svg>
<div style="left:1639.5px;top:66.93px;font:normal 11.9px/11.9px 'Liberation Sans', sans-serif;color:#bbbbbb;white-space:pre;">index.php</div>
<svg style="position:absolute;left:1697px;top:66px;" width="10" height="10" viewBox="0 0 10 10"><path d="M1 1L9 9M9 1L1 9" stroke="#6f7375" stroke-width="1.1"/></svg>
<div style="left:0;top:0;width:2560px;height:967px;clip-path:inset(85px 0 0 0);font:11.666px/11.666px 'Liberation Mono', monospace"><div style="left:1600px;width:37.5px;top:79.06px;color:#606366;text-align:right;transform:scaleY(1.12);transform-origin:0 8.94px">269</div><div style="left:1600px;width:37.5px;top:99.06px;color:#606366;text-align:right;transform:scaleY(1.12);transform-origin:0 8.94px">270</div><div style="left:1600px;width:37.5px;top:119.06px;color:#606366;text-align:right;transform:scaleY(1.12);transform-origin:0 8.94px">271</div><div style="left:1600px;width:37.5px;top:139.06px;color:#606366;text-align:right;transform:scaleY(1.12);transform-origin:0 8.94px">272</div><div style="left:1600px;width:37.5px;top:159.06px;color:#606366;text-align:right;transform:scaleY(1.12);transform-origin:0 8.94px">273</div><div style="left:1600px;width:37.5px;top:179.06px;color:#606366;text-align:right;transform:scaleY(1.12);transform-origin:0 8.94px">274</div><div style="left:1600px;width:37.5px;top:199.06px;color:#606366;text-align:right;transform:scaleY(1.12);transform-origin:0 8.94px">275</div><div style="left:1600px;width:37.5px;top:219.06px;color:#606366;text-align:right;transform:scaleY(1.12);transform-origin:0 8.94px">276</div><div style="left:1600px;width:37.5px;top:239.06px;color:#606366;text-align:right;transform:scaleY(1.12);transform-origin:0 8.94px">277</div><div style="left:1600px;width:37.5px;top:259.06px;color:#606366;text-align:right;transform:scaleY(1.12);transform-origin:0 8.94px">278</div><div style="left:1600px;width:37.5px;top:279.06px;color:#606366;text-align:right;transform:scaleY(1.12);transform-origin:0 8.94px">279</div><div style="left:1600px;width:37.5px;top:299.06px;color:#606366;text-align:right;transform:scaleY(1.12);transform-origin:0 8.94px">280</div><div style="left:1600px;width:37.5px;top:319.06px;color:#606366;text-align:right;transform:scaleY(1.12);transform-origin:0 8.94px">281</div><div style="left:1600px;width:37.5px;top:339.06px;color:#606366;text-align:right;transform:scaleY(1.12);transform-origin:0 8.94px">282</div><div style="left:1600px;width:37.5px;top:359.06px;color:#606366;text-align:right;transform:scaleY(1.12);transform-origin:0 8.94px">283</div><div style="left:1600px;width:37.5px;top:379.06px;color:#606366;text-align:right;transform:scaleY(1.12);transform-origin:0 8.94px">284</div><div style="left:1600px;width:37.5px;top:399.06px;color:#606366;text-align:right;transform:scaleY(1.12);transform-origin:0 8.94px">285</div><div style="left:1600px;width:37.5px;top:419.06px;color:#a4a3a3;text-align:right;transform:scaleY(1.12);transform-origin:0 8.94px">286</div><div style="left:1600px;width:37.5px;top:439.06px;color:#606366;text-align:right;transform:scaleY(1.12);transform-origin:0 8.94px">287</div><div style="left:1600px;width:37.5px;top:459.06px;color:#606366;text-align:right;transform:scaleY(1.12);transform-origin:0 8.94px">288</div><div style="left:1600px;width:37.5px;top:479.06px;color:#606366;text-align:right;transform:scaleY(1.12);transform-origin:0 8.94px">289</div><div style="left:1600px;width:37.5px;top:499.06px;color:#606366;text-align:right;transform:scaleY(1.12);transform-origin:0 8.94px">290</div><div style="left:1600px;width:37.5px;top:519.06px;color:#606366;text-align:right;transform:scaleY(1.12);transform-origin:0 8.94px">291</div><div style="left:1600px;width:37.5px;top:539.06px;color:#606366;text-align:right;transform:scaleY(1.12);transform-origin:0 8.94px">292</div><div style="left:1600px;width:37.5px;top:559.06px;color:#606366;text-align:right;transform:scaleY(1.12);transform-origin:0 8.94px">293</div><div style="left:1600px;width:37.5px;top:579.06px;color:#606366;text-align:right;transform:scaleY(1.12);transform-origin:0 8.94px">294</div><div style="left:1600px;width:37.5px;top:599.06px;color:#606366;text-align:right;transform:scaleY(1.12);transform-origin:0 8.94px">295</div><div style="left:1600px;width:37.5px;top:619.06px;color:#606366;text-align:right;transform:scaleY(1.12);transform-origin:0 8.94px">296</div><div style="left:1600px;width:37.5px;top:639.06px;color:#606366;text-align:right;transform:scaleY(1.12);transform-origin:0 8.94px">297</div><div style="left:1600px;width:37.5px;top:659.06px;color:#606366;text-align:right;transform:scaleY(1.12);transform-origin:0 8.94px">298</div><div style="left:1600px;width:37.5px;top:679.06px;color:#606366;text-align:right;transform:scaleY(1.12);transform-origin:0 8.94px">299</div><div style="left:1600px;width:37.5px;top:699.06px;color:#606366;text-align:right;transform:scaleY(1.12);transform-origin:0 8.94px">300</div><div style="left:1600px;width:37.5px;top:719.06px;color:#606366;text-align:right;transform:scaleY(1.12);transform-origin:0 8.94px">301</div><div style="left:1600px;width:37.5px;top:739.06px;color:#606366;text-align:right;transform:scaleY(1.12);transform-origin:0 8.94px">302</div><div style="left:1600px;width:37.5px;top:759.06px;color:#606366;text-align:right;transform:scaleY(1.12);transform-origin:0 8.94px">303</div><div style="left:1600px;width:37.5px;top:779.06px;color:#606366;text-align:right;transform:scaleY(1.12);transform-origin:0 8.94px">304</div><div style="left:1600px;width:37.5px;top:799.06px;color:#606366;text-align:right;transform:scaleY(1.12);transform-origin:0 8.94px">305</div><div style="left:1600px;width:37.5px;top:819.06px;color:#606366;text-align:right;transform:scaleY(1.12);transform-origin:0 8.94px">306</div><div style="left:1600px;width:37.5px;top:839.06px;color:#606366;text-align:right;transform:scaleY(1.12);transform-origin:0 8.94px">307</div><div style="left:1600px;width:37.5px;top:859.06px;color:#606366;text-align:right;transform:scaleY(1.12);transform-origin:0 8.94px">308</div><div style="left:1600px;width:37.5px;top:879.06px;color:#606366;text-align:right;transform:scaleY(1.12);transform-origin:0 8.94px">309</div><div style="left:1600px;width:37.5px;top:899.06px;color:#606366;text-align:right;transform:scaleY(1.12);transform-origin:0 8.94px">310</div><div style="left:1600px;width:37.5px;top:919.06px;color:#606366;text-align:right;transform:scaleY(1.12);transform-origin:0 8.94px">311</div><div style="left:1600px;width:37.5px;top:939.06px;color:#606366;text-align:right;transform:scaleY(1.12);transform-origin:0 8.94px">312</div><div style="left:1600px;width:37.5px;top:959.06px;color:#606366;text-align:right;transform:scaleY(1.12);transform-origin:0 8.94px">313</div></div>
<div style="left:0;top:0;width:2537px;height:967px;overflow:hidden;font:11.666px/11.666px 'Liberation Mono', monospace"><div style="left:0;top:0;width:2537px;height:967px;clip-path:inset(85px 0 0 1679px)"><div style="left:1679px;top:79.06px;white-space:pre;transform:scaleY(1.1);transform-origin:0 8.94px"><span style="color:#e8bf6a">&lt;div</span><span style="color:#bababa"> class=</span><span style="color:#a5c261">&quot;main-content&quot;</span><span style="color:#e8bf6a">&gt;</span></div><div style="left:1707px;top:99.06px;white-space:pre;transform:scaleY(1.1);transform-origin:0 8.94px"><span style="color:#808080">&lt;!-- </span><span style="color:#808080">Navbar</span><span style="color:#808080"> --&gt;</span></div><div style="left:1707px;top:119.06px;white-space:pre;transform:scaleY(1.1);transform-origin:0 8.94px"><span style="color:#e8bf6a">&lt;nav</span><span style="color:#bababa"> class=</span><span style="color:#a5c261">&quot;</span><span style="color:#a5c261">navbar</span><span style="color:#a5c261"> </span><span style="color:#a5c261">navbar</span><span style="color:#a5c261">-top </span><span style="color:#a5c261">navbar</span><span style="color:#a5c261">-expand-md </span><span style="color:#a5c261">navbar</span><span style="color:#a5c261">-dark&quot;</span><span style="color:#bababa"> id=</span><span style="color:#a5c261">&quot;</span><span style="color:#a5c261">navbar</span><span style="color:#a5c261">-main&quot;</span><span style="color:#e8bf6a">&gt;</span></div><div style="left:1735px;top:139.06px;white-space:pre;transform:scaleY(1.1);transform-origin:0 8.94px"><span style="color:#e8bf6a">&lt;div</span><span style="color:#bababa"> class=</span><span style="color:#a5c261">&quot;container-fluid&quot;</span><span style="color:#e8bf6a">&gt;</span></div><div style="left:1763px;top:159.06px;white-space:pre;transform:scaleY(1.1);transform-origin:0 8.94px"><span style="color:#808080">&lt;!-- Brand --&gt;</span></div><div style="left:1763px;top:179.06px;white-space:pre;transform:scaleY(1.1);transform-origin:0 8.94px"><span style="color:#e8bf6a">&lt;a</span><span style="color:#bababa"> class=</span><span style="color:#a5c261">&quot;h4 mb-0 text-white text-uppercase d-none d-lg-inline-block&quot;</span><span style="color:#bababa"> href=</span><span style="color:#a5c261">&quot;./index.php&quot;</span><span style="color:#e8bf6a">&gt;</span><span style="color:#a9b7c6">Home</span><span style="color:#e8bf6a">&lt;/a&gt;</span></div><div style="left:1763px;top:199.06px;white-space:pre;transform:scaleY(1.1);transform-origin:0 8.94px"><span style="color:#808080">&lt;!-- User --&gt;</span></div><div style="left:1763px;top:219.06px;white-space:pre;transform:scaleY(1.1);transform-origin:0 8.94px"><span style="color:#e8bf6a">&lt;ul</span><span style="color:#bababa"> class=</span><span style="color:#a5c261">&quot;</span><span style="color:#a5c261">navbar</span><span style="color:#a5c261">-nav align-items-center d-none d-md-flex&quot;</span><span style="color:#e8bf6a">&gt;</span></div><div style="left:1791px;top:239.06px;white-space:pre;transform:scaleY(1.1);transform-origin:0 8.94px"><span style="color:#e8bf6a">&lt;li</span><span style="color:#bababa"> class=</span><span style="color:#a5c261">&quot;nav-item dropdown&quot;</span><span style="color:#e8bf6a">&gt;</span></div><div style="left:1819px;top:259.06px;white-space:pre;transform:scaleY(1.1);transform-origin:0 8.94px"><span style="color:#e8bf6a">&lt;a</span><span style="color:#bababa"> class=</span><span style="color:#a5c261">&quot;nav-link pr-0&quot;</span><span style="color:#bababa"> href=</span><span style="color:#a5c261">&quot;#&quot;</span><span style="color:#bababa"> role=</span><span style="color:#a5c261">&quot;button&quot;</span><span style="color:#bababa"> data-toggle=</span><span style="color:#a5c261">&quot;dropdown&quot;</span><span style="color:#bababa"> aria-haspopup=</span><span style="color:#a5c261">&quot;true&quot;</span></div><div style="left:1840px;top:279.06px;white-space:pre;transform:scaleY(1.1);transform-origin:0 8.94px"><span style="color:#bababa">aria-expanded=</span><span style="color:#a5c261">&quot;false&quot;</span><span style="color:#e8bf6a">&gt;</span></div><div style="left:1847px;top:299.06px;white-space:pre;transform:scaleY(1.1);transform-origin:0 8.94px"><span style="color:#e8bf6a">&lt;div</span><span style="color:#bababa"> class=</span><span style="color:#a5c261">&quot;media align-items-center&quot;</span><span style="color:#e8bf6a">&gt;</span></div><div style="left:1791px;top:319.06px;white-space:pre;transform:scaleY(1.1);transform-origin:0 8.94px"><span style="color:#e8bf6a">&lt;span</span><span style="color:#bababa"> class=</span><span style="color:#a5c261">&quot;avatar avatar-sm rounded-circle&quot;</span><span style="color:#e8bf6a">&gt;</span></div><div style="left:1805px;top:339.06px;white-space:pre;transform:scaleY(1.1);transform-origin:0 8.94px"><span style="color:#e8bf6a">&lt;img</span><span style="color:#bababa"> alt=</span><span style="color:#a5c261">&quot;Image placeholder&quot;</span><span style="color:#bababa"> src=</span><span style="color:#a5c261">&quot;./assets/img/brand/</span><span style="color:#a5c261">ravr</span><span style="color:#a5c261">_logo_small.png&quot;</span><span style="color:#e8bf6a">&gt;</span></div><div style="left:1791px;top:359.06px;white-space:pre;transform:scaleY(1.1);transform-origin:0 8.94px"><span style="color:#e8bf6a">&lt;/span&gt;</span></div><div style="left:1875px;top:379.06px;white-space:pre;transform:scaleY(1.1);transform-origin:0 8.94px"><span style="color:#e8bf6a">&lt;div</span><span style="color:#bababa"> class=</span><span style="color:#a5c261">&quot;media-body ml-2 d-none d-lg-block&quot;</span><span style="color:#e8bf6a">&gt;</span></div><div style="left:1903px;top:399.06px;white-space:pre;transform:scaleY(1.1);transform-origin:0 8.94px"><span style="color:#e8bf6a">&lt;span</span><span style="color:#bababa"> class=</span><span style="color:#a5c261">&quot;mb-0 text-sm  font-weight-bold&quot;</span><span style="color:#e8bf6a">&gt;</span><span style="color:#cc7832">&lt;?php echo </span><span style="color:#9876aa">$name</span><span style="color:#cc7832">; ?&gt;</span></div><div style="left:1931px;top:419.06px;white-space:pre;transform:scaleY(1.1);transform-origin:0 8.94px"><span style="color:#cc7832">&lt;?php</span></div><div style="left:1931px;top:439.06px;white-space:pre;transform:scaleY(1.1);transform-origin:0 8.94px"><span style="color:#cc7832">if </span><span style="color:#a9b7c6">(</span><span style="color:#9876aa">$group </span><span style="color:#a9b7c6">== </span><span style="color:#6897bb">2</span><span style="color:#a9b7c6">) {</span></div><div style="left:1959px;top:459.06px;white-space:pre;transform:scaleY(1.1);transform-origin:0 8.94px"><span style="color:#cc7832">echo </span><span style="color:#6a8759">&#x27;</span><span style="color:#e8bf6a">&lt;i</span><span style="color:#bababa"> class=</span><span style="color:#a5c261">&quot;fas fa-graduation-cap text-yellow&quot;</span><span style="color:#bababa"> data-toggle=</span><span style="color:#a5c261">&quot;tooltip&quot;</span><span style="color:#bababa"> data-placement=</span><span style="color:#a5c261">&quot;bottom&quot;</span></div><div style="left:1931px;top:479.06px;white-space:pre;transform:scaleY(1.1);transform-origin:0 8.94px"><span style="color:#a9b7c6">}</span></div><div style="left:1931px;top:519.06px;white-space:pre;transform:scaleY(1.1);transform-origin:0 8.94px"><span style="color:#cc7832">if </span><span style="color:#a9b7c6">(</span><span style="color:#9876aa">$group </span><span style="color:#a9b7c6">== </span><span style="color:#6897bb">3</span><span style="color:#a9b7c6">) {</span></div><div style="left:1959px;top:539.06px;white-space:pre;transform:scaleY(1.1);transform-origin:0 8.94px"><span style="color:#cc7832">echo </span><span style="color:#6a8759">&#x27;</span><span style="color:#e8bf6a">&lt;i</span><span style="color:#bababa"> class=</span><span style="color:#a5c261">&quot;fas fa-chalkboard-teacher text-yellow&quot;</span><span style="color:#bababa"> data-toggle=</span><span style="color:#a5c261">&quot;tooltip&quot;</span><span style="color:#bababa"> data-placement=</span><span style="color:#a5c261">&quot;bottom&quot;</span></div><div style="left:1931px;top:559.06px;white-space:pre;transform:scaleY(1.1);transform-origin:0 8.94px"><span style="color:#a9b7c6">}</span></div><div style="left:1931px;top:599.06px;white-space:pre;transform:scaleY(1.1);transform-origin:0 8.94px"><span style="color:#cc7832">if </span><span style="color:#a9b7c6">(</span><span style="color:#9876aa">$group </span><span style="color:#a9b7c6">== </span><span style="color:#6897bb">4</span><span style="color:#a9b7c6">) {</span></div><div style="left:1959px;top:619.06px;white-space:pre;transform:scaleY(1.1);transform-origin:0 8.94px"><span style="color:#cc7832">echo </span><span style="color:#6a8759">&#x27;</span><span style="color:#e8bf6a">&lt;i</span><span style="color:#bababa"> class=</span><span style="color:#a5c261">&quot;fas fa-crown text-yellow&quot;</span><span style="color:#bababa"> data-toggle=</span><span style="color:#a5c261">&quot;tooltip&quot;</span><span style="color:#bababa"> data-placement=</span><span style="color:#a5c261">&quot;bottom&quot;</span></div><div style="left:1931px;top:639.06px;white-space:pre;transform:scaleY(1.1);transform-origin:0 8.94px"><span style="color:#a9b7c6">}</span></div><div style="left:1931px;top:659.06px;white-space:pre;transform:scaleY(1.1);transform-origin:0 8.94px"><span style="color:#cc7832">?&gt;</span></div><div style="left:1875px;top:679.06px;white-space:pre;transform:scaleY(1.1);transform-origin:0 8.94px"><span style="color:#e8bf6a">&lt;/div&gt;</span></div><div style="left:1847px;top:699.06px;white-space:pre;transform:scaleY(1.1);transform-origin:0 8.94px"><span style="color:#e8bf6a">&lt;/div&gt;</span></div><div style="left:1819px;top:719.06px;white-space:pre;transform:scaleY(1.1);transform-origin:0 8.94px"><span style="color:#e8bf6a">&lt;/a&gt;</span></div><div style="left:1819px;top:739.06px;white-space:pre;transform:scaleY(1.1);transform-origin:0 8.94px"><span style="color:#e8bf6a">&lt;div</span><span style="color:#bababa"> class=</span><span style="color:#a5c261">&quot;dropdown-menu dropdown-menu-arrow dropdown-menu-right&quot;</span><span style="color:#e8bf6a">&gt;</span></div><div style="left:1847px;top:759.06px;white-space:pre;transform:scaleY(1.1);transform-origin:0 8.94px"><span style="color:#e8bf6a">&lt;div</span><span style="color:#bababa"> class=</span><span style="color:#a5c261">&quot; dropdown-header </span><span style="color:#a5c261">noti</span><span style="color:#a5c261">-title&quot;</span><span style="color:#e8bf6a">&gt;</span></div><div style="left:1875px;top:779.06px;white-space:pre;transform:scaleY(1.1);transform-origin:0 8.94px"><span style="color:#e8bf6a">&lt;h6</span><span style="color:#bababa"> class=</span><span style="color:#a5c261">&quot;text-overflow m-0&quot;</span><span style="color:#e8bf6a">&gt;</span></div><div style="left:1903px;top:799.06px;white-space:pre;transform:scaleY(1.1);transform-origin:0 8.94px"><span style="color:#e8bf6a">&lt;script&gt;</span></div><div style="left:1931px;top:819.06px;white-space:pre;transform:scaleY(1.1);transform-origin:0 8.94px"><span style="color:#cc7832">var</span><span style="color:#a9b7c6"> </span><span style="color:#9876aa;font-style:italic">today</span><span style="color:#a9b7c6"> = </span><span style="color:#cc7832">new </span><span style="color:#9876aa;font-style:italic">Date</span><span style="color:#a9b7c6">()</span><span style="color:#cc7832">;</span></div><div style="left:1931px;top:839.06px;white-space:pre;transform:scaleY(1.1);transform-origin:0 8.94px"><span style="color:#cc7832">var</span><span style="color:#a9b7c6"> </span><span style="color:#9876aa;font-style:italic">curHr</span><span style="color:#a9b7c6"> = </span><span style="color:#9876aa;font-style:italic">today</span><span style="color:#a9b7c6">.</span><span style="color:#ffc66d">getHours</span><span style="color:#a9b7c6">()</span><span style="color:#cc7832">;</span></div><div style="left:1931px;top:879.06px;white-space:pre;transform:scaleY(1.1);transform-origin:0 8.94px"><span style="color:#cc7832">if </span><span style="color:#a9b7c6">(</span><span style="color:#9876aa;font-style:italic">curHr </span><span style="color:#a9b7c6">&lt; </span><span style="color:#6897bb">12</span><span style="color:#a9b7c6">) {</span></div><div style="left:1959px;top:899.06px;white-space:pre;transform:scaleY(1.1);transform-origin:0 8.94px"><span style="color:#9876aa;font-style:italic">document</span><span style="color:#a9b7c6">.</span><span style="color:#ffc66d">write</span><span style="color:#a9b7c6">(</span><span style="color:#6a8759">&#x27;</span><span style="color:#6a8759">Goedemorgen</span><span style="color:#6a8759">,&#x27;</span><span style="color:#a9b7c6">)</span></div><div style="left:1931px;top:919.06px;white-space:pre;transform:scaleY(1.1);transform-origin:0 8.94px"><span style="color:#a9b7c6">} </span><span style="color:#cc7832">else if </span><span style="color:#a9b7c6">(</span><span style="color:#9876aa;font-style:italic">curHr </span><span style="color:#a9b7c6">&lt; </span><span style="color:#6897bb">18</span><span style="color:#a9b7c6">) {</span></div><div style="left:1959px;top:939.06px;white-space:pre;transform:scaleY(1.1);transform-origin:0 8.94px"><span style="color:#9876aa;font-style:italic">document</span><span style="color:#a9b7c6">.</span><span style="color:#ffc66d">write</span><span style="color:#a9b7c6">(</span><span style="color:#6a8759">&#x27;</span><span style="color:#6a8759">Goedemiddag</span><span style="color:#6a8759">,&#x27;</span><span style="color:#a9b7c6">)</span></div><div style="left:1931px;top:959.06px;white-space:pre;transform:scaleY(1.1);transform-origin:0 8.94px"><span style="color:#a9b7c6">} </span><span style="color:#cc7832">else </span><span style="color:#a9b7c6">{</span></div><div style="left:1742px;top:110px;width:42px;height:2px;background:repeating-linear-gradient(90deg,#629755 0 1.5px,transparent 1.5px 3px) 0 0/100% 1px no-repeat,repeating-linear-gradient(90deg,transparent 0 1.5px,#629755 1.5px 3px) 0 1px/100% 1px no-repeat"></div><div style="left:1791px;top:130px;width:42px;height:2px;background:repeating-linear-gradient(90deg,#629755 0 1.5px,transparent 1.5px 3px) 0 0/100% 1px no-repeat,repeating-linear-gradient(90deg,transparent 0 1.5px,#629755 1.5px 3px) 0 1px/100% 1px no-repeat"></div><div style="left:1840px;top:130px;width:42px;height:2px;background:repeating-linear-gradient(90deg,#629755 0 1.5px,transparent 1.5px 3px) 0 0/100% 1px no-repeat,repeating-linear-gradient(90deg,transparent 0 1.5px,#629755 1.5px 3px) 0 1px/100% 1px no-repeat"></div><div style="left:1917px;top:130px;width:42px;height:2px;background:repeating-linear-gradient(90deg,#629755 0 1.5px,transparent 1.5px 3px) 0 0/100% 1px no-repeat,repeating-linear-gradient(90deg,transparent 0 1.5px,#629755 1.5px 3px) 0 1px/100% 1px no-repeat"></div><div style="left:2036px;top:130px;width:42px;height:2px;background:repeating-linear-gradient(90deg,#629755 0 1.5px,transparent 1.5px 3px) 0 0/100% 1px no-repeat,repeating-linear-gradient(90deg,transparent 0 1.5px,#629755 1.5px 3px) 0 1px/100% 1px no-repeat"></div><div style="left:2155px;top:130px;width:42px;height:2px;background:repeating-linear-gradient(90deg,#629755 0 1.5px,transparent 1.5px 3px) 0 0/100% 1px no-repeat,repeating-linear-gradient(90deg,transparent 0 1.5px,#629755 1.5px 3px) 0 1px/100% 1px no-repeat"></div><div style="left:1840px;top:230px;width:42px;height:2px;background:repeating-linear-gradient(90deg,#629755 0 1.5px,transparent 1.5px 3px) 0 0/100% 1px no-repeat,repeating-linear-gradient(90deg,transparent 0 1.5px,#629755 1.5px 3px) 0 1px/100% 1px no-repeat"></div><div style="left:2176px;top:350px;width:28px;height:2px;background:repeating-linear-gradient(90deg,#629755 0 1.5px,transparent 1.5px 3px) 0 0/100% 1px no-repeat,repeating-linear-gradient(90deg,transparent 0 1.5px,#629755 1.5px 3px) 0 1px/100% 1px no-repeat"></div><div style="left:2050px;top:770px;width:28px;height:2px;background:repeating-linear-gradient(90deg,#629755 0 1.5px,transparent 1.5px 3px) 0 0/100% 1px no-repeat,repeating-linear-gradient(90deg,transparent 0 1.5px,#629755 1.5px 3px) 0 1px/100% 1px no-repeat"></div><div style="left:1931px;top:830px;width:21px;height:2px;background:repeating-linear-gradient(90deg,#8b8b55 0 1.5px,transparent 1.5px 3px) 0 0/100% 1px no-repeat,repeating-linear-gradient(90deg,transparent 0 1.5px,#8b8b55 1.5px 3px) 0 1px/100% 1px no-repeat"></div><div style="left:1931px;top:850px;width:21px;height:2px;background:repeating-linear-gradient(90deg,#8b8b55 0 1.5px,transparent 1.5px 3px) 0 0/100% 1px no-repeat,repeating-linear-gradient(90deg,transparent 0 1.5px,#8b8b55 1.5px 3px) 0 1px/100% 1px no-repeat"></div><div style="left:2071px;top:910px;width:77px;height:2px;background:repeating-linear-gradient(90deg,#629755 0 1.5px,transparent 1.5px 3px) 0 0/100% 1px no-repeat,repeating-linear-gradient(90deg,transparent 0 1.5px,#629755 1.5px 3px) 0 1px/100% 1px no-repeat"></div><div style="left:2071px;top:950px;width:77px;height:2px;background:repeating-linear-gradient(90deg,#629755 0 1.5px,transparent 1.5px 3px) 0 0/100% 1px no-repeat,repeating-linear-gradient(90deg,transparent 0 1.5px,#629755 1.5px 3px) 0 1px/100% 1px no-repeat"></div></div></div>
<div style="left:1679px;top:416px;width:2px;height:14px;background:#e0e0e0;"></div>
<div style="left:1680px;top:957px;width:532px;height:8px;background:rgba(90,90,90,.75);"></div>
<div style="left:2519px;top:85px;width:1px;height:882px;background:#3b3b3b;"></div>
<div style="left:2520px;top:85px;width:17px;height:882px;background:transparent;"></div>
<svg style="position:absolute;left:2525px;top:87px;" width="11" height="11" viewBox="0 0 11 11"><circle cx="5.5" cy="5.5" r="5.5" fill="#c93b3b"/><rect x="4.6" y="2" width="1.8" height="4.6" fill="#2b2b2b"/><rect x="4.6" y="7.6" width="1.8" height="1.6" fill="#2b2b2b"/></svg>
<div style="left:2523px;top:134px;width:14px;height:3px;background:#8c8460;"></div>
<div style="left:2523px;top:190px;width:14px;height:4px;background:#8c8460;"></div>
<div style="left:2523px;top:209px;width:14px;height:3px;background:#b34040;"></div>
<div style="left:2523px;top:248px;width:14px;height:3px;background:#c9a227;"></div>
<div style="left:2523px;top:284px;width:14px;height:3px;background:#c9a227;"></div>
<div style="left:2523px;top:300px;width:14px;height:3px;background:#c9a227;"></div>
<div style="left:2523px;top:310px;width:14px;height:3px;background:#c9a227;"></div>
<div style="left:2523px;top:318px;width:14px;height:3px;background:#c9a227;"></div>
<div style="left:2523px;top:328px;width:14px;height:3px;background:#c9a227;"></div>
<div style="left:2523px;top:371px;width:14px;height:3px;background:#b34040;"></div>
<div style="left:2523px;top:392px;width:14px;height:3px;background:#c9a227;"></div>
<div style="left:2523px;top:406px;width:14px;height:3px;background:#c9a227;"></div>
<div style="left:2523px;top:420px;width:14px;height:3px;background:#c9a227;"></div>
<div style="left:2523px;top:434px;width:14px;height:3px;background:#c9a227;"></div>
<div style="left:2523px;top:454px;width:14px;height:3px;background:#c9a227;"></div>
<div style="left:2523px;top:464px;width:14px;height:3px;background:#c9a227;"></div>
<div style="left:2523px;top:472px;width:14px;height:3px;background:#c9a227;"></div>
<div style="left:2523px;top:480px;width:14px;height:3px;background:#c9a227;"></div>
<div style="left:2523px;top:490px;width:14px;height:3px;background:#c9a227;"></div>
<div style="left:2523px;top:638px;width:14px;height:3px;background:#8c8460;"></div>
<div style="left:2523px;top:936px;width:14px;height:3px;background:#c9a227;"></div>
<div style="left:2523px;top:942px;width:14px;height:3px;background:#8c8460;"></div>
<div style="left:2528px;top:576px;width:8px;height:74px;background:rgba(150,150,150,.28);"></div>
<div style="left:2537px;top:58px;width:22px;height:932px;background:#3c3f41;"></div>
<div style="left:2537px;top:58px;width:1px;height:932px;background:#323232;"></div>
<div style="left:2559px;top:0px;width:1px;height:1040px;background:#2b2b2b;"></div>
<svg style="position:absolute;left:2542px;top:67px;" width="12" height="14" viewBox="0 0 12 14"><ellipse cx="6" cy="2.5" rx="5.5" ry="2.3" fill="#afb1b3"/><path d="M0.5 4.5Q6 8 11.5 4.5V6.5Q6 10 0.5 6.5Z M0.5 8.5Q6 12 11.5 8.5V10.5Q6 14 0.5 10.5Z" fill="#afb1b3"/></svg>
<div style="left:2556px;top:86px;transform-origin:0 0;transform:rotate(90deg);font:11px/16px 'Liberation Sans', sans-serif;color:#bbbbbb;white-space:pre">Database</div>
<div style="left:1611px;top:967px;width:926px;height:22px;background:#313335;"></div>
<div style="left:0;top:0;width:2537px;height:1040px;overflow:hidden"><div style="left:1683.6px;top:973.81px;font:12.5px/11.8px 'Liberation Sans', sans-serif;color:#6d97c9;white-space:pre">html</div><div style="left:1732px;top:973.81px;font:12.5px/11.8px 'Liberation Sans', sans-serif;color:#57aaa0;white-space:pre">body</div><div style="left:1783px;top:973.81px;font:12.5px/11.8px 'Liberation Sans', sans-serif;color:#62b543;white-space:pre">div.main-content</div><div style="left:1899px;top:973.81px;font:12.1px/11.8px 'Liberation Sans', sans-serif;color:#b2ad5b;white-space:pre">nav#navbar-main.navbar.navbar-top.navbar-expand-md.navbar-dark</div><div style="left:2290px;top:973.81px;font:12.5px/11.8px 'Liberation Sans', sans-serif;color:#c75450;white-space:pre">div.container-fluid</div><div style="left:2412px;top:973.81px;font:12.5px/11.8px 'Liberation Sans', sans-serif;color:#b15cc7;white-space:pre">ul.navbar-nav.align-items-center.d-none.d-md-flex</div></div>
<svg style="position:absolute;left:1719px;top:975px;" width="5" height="9" viewBox="0 0 5 9"><path d="M0.5 0.5L4 4.5L0.5 8.5" stroke="#5c5e60" stroke-width="1" fill="none"/></svg>
<svg style="position:absolute;left:1770px;top:975px;" width="5" height="9" viewBox="0 0 5 9"><path d="M0.5 0.5L4 4.5L0.5 8.5" stroke="#5c5e60" stroke-width="1" fill="none"/></svg>
<svg style="position:absolute;left:1886px;top:975px;" width="5" height="9" viewBox="0 0 5 9"><path d="M0.5 0.5L4 4.5L0.5 8.5" stroke="#5c5e60" stroke-width="1" fill="none"/></svg>
<svg style="position:absolute;left:2277px;top:975px;" width="5" height="9" viewBox="0 0 5 9"><path d="M0.5 0.5L4 4.5L0.5 8.5" stroke="#5c5e60" stroke-width="1" fill="none"/></svg>
<svg style="position:absolute;left:2399px;top:975px;" width="5" height="9" viewBox="0 0 5 9"><path d="M0.5 0.5L4 4.5L0.5 8.5" stroke="#5c5e60" stroke-width="1" fill="none"/></svg>
<div style="left:1281px;top:989px;width:1278px;height:1px;background:#2b2b2b;"></div>
<div style="left:1281px;top:990px;width:1278px;height:22px;background:#3c3f41;"></div>
<svg style="position:absolute;left:1314px;top:996px;" width="11" height="10" viewBox="0 0 11 10"><rect width="11" height="10" fill="#afb1b3"/><path d="M2 2L4.5 4.5L2 7" stroke="#3c3f41" stroke-width="1" fill="none"/><rect x="5" y="7" width="4" height="1" fill="#3c3f41"/></svg>
<div style="left:1330px;top:996.15px;font:normal 11.4px/11.4px 'Liberation Sans', sans-serif;color:#bbbbbb;white-space:pre;">Terminal</div>
<svg style="position:absolute;left:1396px;top:996px;" width="11" height="10" viewBox="0 0 11 10"><rect x="0" y="0.5" width="2" height="2" fill="#afb1b3"/><rect x="3" y="0.5" width="8" height="2" fill="#afb1b3"/><rect x="0" y="4" width="2" height="2" fill="#afb1b3"/><rect x="3" y="4" width="8" height="2" fill="#afb1b3"/><rect x="0" y="7.5" width="2" height="2" fill="#afb1b3"/><rect x="3" y="7.5" width="8" height="2" fill="#afb1b3"/></svg>
<div style="left:1411.2px;top:996.57px;font:normal 10.9px/10.9px 'Liberation Sans', sans-serif;color:#bbbbbb;white-space:pre;">6: TODO</div>
<div style="left:1411px;top:1008px;width:7px;height:1px;background:#bbbbbb;"></div>
<svg style="position:absolute;left:2461px;top:995px;" width="12" height="12" viewBox="0 0 12 12"><circle cx="5.5" cy="5.5" r="5.5" fill="#499c54"/><text x="5.5" y="9" font-family="Liberation Sans" font-weight="bold" font-size="8.5" fill="#fff" text-anchor="middle">1</text></svg>
<div style="left:2477px;top:996.40px;font:normal 11.1px/11.1px 'Liberation Sans', sans-serif;color:#bbbbbb;white-space:pre;">Event Log</div>
<div style="left:1281px;top:1011px;width:1278px;height:1px;background:#4b4d4f;"></div>
<div style="left:1281px;top:1012px;width:1278px;height:20px;background:#3c3f41;"></div>
<svg style="position:absolute;left:1287px;top:1016px;" width="12" height="12" viewBox="0 0 12 12"><rect x="3.5" y="0.5" width="8" height="8" fill="none" stroke="#afb1b3"/><path d="M1 3V11H9" stroke="#afb1b3" fill="none"/></svg>
<div style="left:1308px;top:1016.14px;font:normal 12.0px/12.0px 'Liberation Sans', sans-serif;color:#bbbbbb;white-space:pre;">Windows Defender configuration updated (3 minutes ago)</div>
<div style="left:2182px;top:1015.93px;font:normal 11.3px/11.3px 'Liberation Sans', sans-serif;color:#bbbbbb;white-space:pre;">895 chars, 12 line breaks</div>
<div style="left:2323px;top:1015.93px;font:normal 11.3px/11.3px 'Liberation Sans', sans-serif;color:#bbbbbb;white-space:pre;">286:1</div>
<div style="left:2362px;top:1015.93px;font:normal 11.3px/11.3px 'Liberation Sans', sans-serif;color:#bbbbbb;white-space:pre;">LF</div>
<div style="left:2387px;top:1015.93px;font:normal 11.3px/11.3px 'Liberation Sans', sans-serif;color:#bbbbbb;white-space:pre;">UTF-8</div>
<div style="left:2431px;top:1015.93px;font:normal 11.3px/11.3px 'Liberation Sans', sans-serif;color:#bbbbbb;white-space:pre;">4 spaces</div>
<svg style="position:absolute;left:2486px;top:1014px;" width="12" height="13" viewBox="0 0 12 13"><path d="M3 6V3.5A2.5 2.5 0 0 1 8 3.5" stroke="#afb1b3" stroke-width="1.4" fill="none"/><rect x="1" y="6" width="9" height="7" fill="#afb1b3"/></svg>
<svg style="position:absolute;left:2511px;top:1014px;" width="13" height="14" viewBox="0 0 13 14"><path d="M2 5H11L10 2H3Z" fill="#afb1b3"/><rect x="0" y="5" width="13" height="1.5" fill="#afb1b3"/><circle cx="6.5" cy="9" r="3" fill="#afb1b3"/><path d="M1 14Q6.5 9 12 14Z" fill="#afb1b3"/></svg>
<svg style="position:absolute;left:2533px;top:1013px;" width="16" height="16" viewBox="0 0 16 16"><path d="M2 12A5 5 0 0 1 4 3A5.5 5.5 0 0 1 13 4A4 4 0 0 1 12 12Z" fill="#afb1b3"/><text x="6" y="10" font-family="Liberation Sans" font-weight="bold" font-size="8" fill="#3c3f41">?</text><circle cx="12" cy="12" r="3" fill="#3c3f41"/><circle cx="12" cy="12" r="2" fill="none" stroke="#afb1b3" stroke-width="1.3"/></svg>
<div style="left:1281px;top:1032px;width:1278px;height:7px;background:#323436;"></div>
<div style="left:1281px;top:1032px;width:1278px;height:7px;overflow:hidden;opacity:.45"><div style="left:27px;top:-8.86px;font:12px/12px 'Liberation Sans', sans-serif;color:#bbbbbb;white-space:pre">Windows Defender configuration updated (3 minutes ago)</div><div style="left:901px;top:-9.07px;font:11.3px/11.3px 'Liberation Sans', sans-serif;color:#bbbbbb;white-space:pre">895 chars, 12 line breaks</div><div style="left:1042px;top:-9.07px;font:11.3px/11.3px 'Liberation Sans', sans-serif;color:#bbbbbb;white-space:pre">286:1</div><div style="left:1081px;top:-9.07px;font:11.3px/11.3px 'Liberation Sans', sans-serif;color:#bbbbbb;white-space:pre">LF</div><div style="left:1106px;top:-9.07px;font:11.3px/11.3px 'Liberation Sans', sans-serif;color:#bbbbbb;white-space:pre">UTF-8</div><div style="left:1150px;top:-9.07px;font:11.3px/11.3px 'Liberation Sans', sans-serif;color:#bbbbbb;white-space:pre">4 spaces</div></div>
<div style="left:1281px;top:1039px;width:219px;height:1px;background:#3a4150;"></div>
<div style="left:1500px;top:1039px;width:1059px;height:1px;background:#a6a6a6;"></div>
<div style="left:0px;top:1040px;width:2560px;height:40px;background:#353322;"></div>
<div style="left:686px;top:1040px;width:44px;height:40px;background:#5e5849;"></div>
<div style="left:730px;top:1040px;width:3px;height:40px;background:#4a4538;"></div>
<div style="left:151px;top:1078px;width:40px;height:2px;background:#e3a5ef;"></div>
<div style="left:200px;top:1078px;width:40px;height:2px;background:#e3a5ef;"></div>
<div style="left:298px;top:1078px;width:40px;height:2px;background:#e3a5ef;"></div>
<div style="left:347px;top:1078px;width:40px;height:2px;background:#e3a5ef;"></div>
<div style="left:494px;top:1078px;width:40px;height:2px;background:#e3a5ef;"></div>
<div style="left:641px;top:1078px;width:40px;height:2px;background:#e3a5ef;"></div>
<div style="left:686px;top:1078px;width:47px;height:2px;background:#e3a5ef;"></div>
<div style="left:788px;top:1078px;width:40px;height:2px;background:#e3a5ef;"></div>
<div style="left:935px;top:1078px;width:40px;height:2px;background:#e3a5ef;"></div>
<svg style="position:absolute;left:16px;top:1052px;" width="17" height="16" viewBox="0 0 17 16"><path d="M0 2.3L7 1.3V7.5H0Z M8 1.1L17 0V7.5H8Z M0 8.5H7V14.7L0 13.7Z M8 8.5H17V16L8 14.9Z" fill="#fff"/></svg>
<svg style="position:absolute;left:63px;top:1051px;" width="18" height="18" viewBox="0 0 18 18"><circle cx="11" cy="7" r="5.8" stroke="#fff" stroke-width="1.3" fill="none"/><path d="M6.8 11.2L0.7 17.3" stroke="#fff" stroke-width="1.4"/></svg>
<svg style="position:absolute;left:111px;top:1051px;" width="17" height="18" viewBox="0 0 17 18"><rect x="1" y="4" width="10" height="10" fill="none" stroke="#fff" stroke-width="1.3"/><path d="M0 1.5H12M0 16.5H12" stroke="#fff" stroke-width="1.3"/><path d="M15.5 0V18" stroke="#fff" stroke-width="1.3"/><rect x="14" y="5" width="3" height="3" fill="#fff"/></svg>
<svg style="position:absolute;left:160px;top:1051px;" width="21" height="18" viewBox="0 0 21 18"><path d="M0 1.5Q0 0 1.5 0H7L9 2H21V17H0Z" fill="#f8d775"/><rect x="0" y="3" width="21" height="14" fill="#ffe594"/><rect x="1" y="1" width="5" height="1.5" fill="#9fd4e8"/><path d="M4 10H17V17H13V13H8V17H4Z" fill="#2f9ee0"/></svg>
<svg style="position:absolute;left:208px;top:1048px;" width="24" height="24" viewBox="0 0 24 24"><circle cx="12" cy="12" r="11.5" fill="#db4437"/><path d="M12 12L22 6.25A11.5 11.5 0 0 1 12 23.5Z" fill="#fcc934"/><path d="M12 12L12 23.5A11.5 11.5 0 0 1 2 6.25Z" fill="#1ea362"/><path d="M12 12L2 6.25A11.5 11.5 0 0 1 22 6.25Z" fill="#db4437"/><circle cx="12" cy="12" r="5.3" fill="#fff"/><circle cx="12" cy="12" r="4.2" fill="#4c8bf5"/></svg>
<svg style="position:absolute;left:257px;top:1048px;" width="24" height="24" viewBox="0 0 24 24"><circle cx="12" cy="13" r="11" fill="#ff7139"/><path d="M12 2A11 11 0 0 1 23 13Q22 5 15 1Z" fill="#ffbd4f"/><path d="M4 6Q2 10 3 14Q5 8 9 8Z" fill="#ff980e"/><circle cx="12.5" cy="13" r="6" fill="#7542e5"/><path d="M6 12Q8 7 13 8Q10 10 11 13Q12 16 17 15Q14 20 9 18Q5 16 6 12Z" fill="#ff4f5e"/></svg>
<svg style="position:absolute;left:305px;top:1048px;" width="24" height="23" viewBox="0 0 24 23"><rect x="6" y="1" width="17" height="20" fill="#1490df"/><rect x="14" y="1" width="9" height="6" fill="#28a8ea"/><rect x="6" y="7" width="8" height="7" fill="#0078d4"/><path d="M6 12L23 21V13Z" fill="#50d9ff" opacity=".7"/><path d="M6 21L23 12V23H6Z" fill="#1490df"/><rect x="0" y="5" width="13" height="13" fill="#0364b8"/><ellipse cx="6.5" cy="11.5" rx="3.3" ry="3.8" fill="none" stroke="#fff" stroke-width="1.8"/></svg>
<svg style="position:absolute;left:354px;top:1047px;" width="26" height="26" viewBox="0 0 26 26"><circle cx="14" cy="4" r="3.5" fill="#7b83eb"/><circle cx="21" cy="6" r="2.5" fill="#5059c9"/><rect x="10" y="8" width="10" height="13" rx="3" fill="#7b83eb"/><rect x="17" y="9" width="7" height="10" rx="2" fill="#5059c9"/><rect x="0" y="5" width="12" height="12" fill="#4b53bc"/><path d="M3 8H9M6 8V15" stroke="#fff" stroke-width="1.8"/><circle cx="20" cy="20" r="5" fill="#92c353" stroke="#353322" stroke-width="1"/><path d="M17.5 20L19.3 21.8L22.5 18.5" stroke="#fff" stroke-width="1.3" fill="none"/></svg>
<svg style="position:absolute;left:404px;top:1047px;" width="25" height="26" viewBox="0 0 25 26"><path d="M12.5 2L23 13L12.5 24L2 13Z" fill="#53b887" stroke="#53b887" stroke-width="3.5" stroke-linejoin="round"/><path d="M12.5 5.5L19.5 13L12.5 20.5L5.5 13Z" fill="none" stroke="#d8f2e4" stroke-width="1.1"/><path d="M12.5 8.5L16.5 13L12.5 17.5L8.5 13Z" fill="none" stroke="#d8f2e4" stroke-width="1"/><path d="M10.5 12H14.5M10.5 14H14.5" stroke="#d8f2e4" stroke-width=".8"/></svg>
<svg style="position:absolute;left:453px;top:1049px;" width="22" height="22" viewBox="0 0 22 22"><circle cx="11" cy="11" r="11" fill="#0c5dde"/><circle cx="11" cy="9.5" r="4.3" fill="#fff"/><rect x="9.8" y="11" width="2.4" height="7" fill="#fff"/><circle cx="11" cy="9.5" r="1.6" fill="#0c5dde"/></svg>
<svg style="position:absolute;left:501px;top:1048px;" width="24" height="24" viewBox="0 0 24 24"><circle cx="12" cy="12" r="11.5" fill="#f2f2f2"/><rect x="5" y="9.5" width="7" height="2.4" rx="1.2" fill="#36c5f0"/><rect x="9.5" y="4.5" width="2.4" height="7" rx="1.2" fill="#36c5f0"/><rect x="12.5" y="5" width="2.4" height="7" rx="1.2" fill="#2eb67d"/><rect x="12.5" y="9.5" width="7" height="2.4" rx="1.2" fill="#2eb67d"/><rect x="12" y="12.5" width="7" height="2.4" rx="1.2" fill="#ecb22e"/><rect x="12.5" y="12.5" width="2.4" height="7" rx="1.2" fill="#ecb22e"/><rect x="9.5" y="12.5" width="2.4" height="7" rx="1.2" fill="#e01e5a"/><rect x="5" y="12.5" width="7" height="2.4" rx="1.2" fill="#e01e5a"/></svg>
<svg style="position:absolute;left:550px;top:1048px;" width="24" height="24" viewBox="0 0 24 24"><circle cx="12" cy="12" r="9" fill="none" stroke="#fbbc04" stroke-width="6"/><path d="M12 3A9 9 0 0 1 21 12" stroke="#34a853" stroke-width="6" fill="none"/><path d="M3 12A9 9 0 0 1 12 3" stroke="#4285f4" stroke-width="6" fill="none"/><path d="M12 21A9 9 0 0 1 3 12" stroke="#ea4335" stroke-width="6" fill="none"/></svg>
<svg style="position:absolute;left:598px;top:1047px;" width="25" height="25" viewBox="0 0 25 25"><path d="M0 0H7V2L2 2V7H0Z" fill="#1e88e5"/><path d="M1 1L7 7" stroke="#1e88e5" stroke-width="2"/><path d="M8 10V7A4.5 4.5 0 0 1 17 7V10" stroke="#aaa" stroke-width="2" fill="none"/><rect x="6" y="10" width="13" height="10" fill="#777"/><rect x="6" y="10" width="13" height="3" fill="#999"/><path d="M25 25H18V23H23V18H25Z" fill="#2ecc40"/><path d="M24 24L17 17" stroke="#2ecc40" stroke-width="2.2"/></svg>
<svg style="position:absolute;left:649px;top:1048px;" width="24" height="24" viewBox="0 0 24 24"><circle cx="12" cy="12" r="12" fill="#1ed760"/><path d="M5 8.5Q12 6 19.5 9.5M6 12.5Q12 10.5 18 13.5M7 16Q12 14.5 16.5 17" stroke="#191414" stroke-width="2" fill="none" stroke-linecap="round"/></svg>
<svg style="position:absolute;left:698px;top:1048px;" width="24" height="24" viewBox="0 0 24 24"><path d="M3 2L14 0L23 4L22 18L13 24L2 19Z" fill="#af1df5"/><path d="M3 2L14 0L10 8Z" fill="#ff318c"/><path d="M23 4L22 18L16 12Z" fill="#6b57ff"/><rect x="5" y="5" width="14" height="14" fill="#000"/><text x="6" y="12.5" font-family="Liberation Sans" font-weight="bold" font-size="7.5" fill="#fff">PS</text><rect x="6.5" y="16" width="5" height="1.2" fill="#fff"/></svg>
<svg style="position:absolute;left:747px;top:1048px;" width="24" height="24" viewBox="0 0 24 24"><path d="M3 2L14 0L23 4L22 18L13 24L2 19Z" fill="#f97a12"/><path d="M3 2L14 0L10 8Z" fill="#fe315d"/><path d="M23 4L22 18L16 12Z" fill="#087cfa"/><rect x="5" y="5" width="14" height="14" fill="#000"/><text x="6" y="12.5" font-family="Liberation Sans" font-weight="bold" font-size="7.5" fill="#fff">IJ</text><rect x="6.5" y="16" width="5" height="1.2" fill="#fff"/></svg>
<svg style="position:absolute;left:795px;top:1048px;" width="24" height="24" viewBox="0 0 24 24"><path d="M3 2L14 0L23 4L22 18L13 24L2 19Z" fill="#9775f8"/><path d="M3 2L14 0L10 8Z" fill="#22d88f"/><path d="M23 4L22 18L16 12Z" fill="#21d789"/><rect x="5" y="5" width="14" height="14" fill="#000"/><text x="6" y="12.5" font-family="Liberation Sans" font-weight="bold" font-size="7.5" fill="#fff">DG</text><rect x="6.5" y="16" width="5" height="1.2" fill="#fff"/></svg>
<svg style="position:absolute;left:844px;top:1048px;" width="25" height="25" viewBox="0 0 25 25"><g transform="scale(0.25)"><path d="M96.46 10.8L75.86 0.87C73.48-0.28 70.63 0.21 68.76 2.07L29.36 38.02L12.2 25C10.6 23.79 8.36 23.89 6.88 25.24L1.37 30.25C-0.44 31.9-0.44 34.76 1.37 36.41L16.26 50L1.37 63.59C-0.44 65.24-0.44 68.1 1.37 69.75L6.88 74.76C8.36 76.11 10.6 76.21 12.2 75L29.36 61.98L68.76 97.93C70.63 99.79 73.48 100.28 75.86 99.13L96.46 89.2C98.62 88.16 100 85.97 100 83.57V16.43C100 14.03 98.62 11.84 96.46 10.8ZM75.02 72.7L45.12 50L75.02 27.3Z" fill="#0a7fd0"/><path d="M96.46 10.8L75.86 0.87C73.48-0.28 70.63 0.21 68.76 2.07C70.2 0.8 72.2 1.5 72.2 3.5V96.5C72.2 98.5 70.2 99.2 68.76 97.93C70.63 99.79 73.48 100.28 75.86 99.13L96.46 89.2C98.62 88.16 100 85.97 100 83.57V16.43C100 14.03 98.62 11.84 96.46 10.8Z" fill="#24a8f1"/></g></svg>
<svg style="position:absolute;left:894px;top:1048px;" width="24" height="24" viewBox="0 0 24 24"><rect x="0.5" y="0.5" width="23" height="20" fill="#0b2a3a" stroke="#1d4f66"/><path d="M6 5H17M6 5V16H17M9 10.5H17" stroke="#e8e6d0" stroke-width="2" fill="none"/><rect x="8" y="22" width="8" height="1.5" fill="#1d4f66"/></svg>
<svg style="position:absolute;left:943px;top:1048px;" width="24" height="24" viewBox="0 0 24 24"><rect x="0" y="0" width="24" height="24" rx="3" fill="#f37a26"/><path d="M7 5Q4 5 4 8Q4 10.5 7 12Q4 13.5 4 16Q4 19 7 19Q9.5 19 12 16Q14.5 19 17 19Q20 19 20 16Q20 13.5 17 12Q20 10.5 20 8Q20 5 17 5Q14.5 5 12 8Q9.5 5 7 5Z" fill="none" stroke="#fff" stroke-width="2.4"/></svg>
<svg style="position:absolute;left:2304px;top:1055px;" width="13" height="8" viewBox="0 0 13 8"><path d="M0.7 7.3L6.5 1.2L12.3 7.3" stroke="#fff" stroke-width="1.2" fill="none"/></svg>
<svg style="position:absolute;left:2326px;top:1054px;" width="17" height="11" viewBox="0 0 17 11"><path d="M3 11A3 3 0 0 1 3 5A5 5 0 0 1 12 3.5A4 4 0 0 1 16.5 8A3 3 0 0 1 14 11Z" fill="#0f78d4"/><path d="M6 11A3 3 0 0 1 7 6A4 4 0 0 1 13 6A3 3 0 0 1 17 9A2.5 2.5 0 0 1 14.5 11Z" fill="#28a8ea"/></svg>
<svg style="position:absolute;left:2351px;top:1053px;" width="16" height="13" viewBox="0 0 16 13"><rect x="6" y="2" width="9" height="7" fill="#6fcf6f" stroke="#fff" stroke-width="1.2"/><path d="M10.5 9V12M7 12.5H14" stroke="#fff" stroke-width="1.2"/><rect x="0.5" y="4" width="6" height="4.5" fill="#fff"/><path d="M2 4V2.5A1.5 1.5 0 0 1 5 2.5V4" stroke="#fff" stroke-width="1" fill="none"/></svg>
<svg style="position:absolute;left:2375px;top:1053px;" width="15" height="15" viewBox="0 0 15 15"><circle cx="7.5" cy="7.5" r="5.5" fill="none" stroke="#fbbc04" stroke-width="4"/><path d="M7.5 2A5.5 5.5 0 0 1 13 7.5" stroke="#34a853" stroke-width="4" fill="none"/><path d="M2 7.5A5.5 5.5 0 0 1 7.5 2" stroke="#4285f4" stroke-width="4" fill="none"/><path d="M7.5 13A5.5 5.5 0 0 1 2 7.5" stroke="#ea4335" stroke-width="4" fill="none"/></svg>
<svg style="position:absolute;left:2399px;top:1053px;" width="17" height="14" viewBox="0 0 17 14"><rect x="3.5" y="1.5" width="13" height="9" fill="none" stroke="#fff" stroke-width="1"/><path d="M10 10.5V13M6.5 13.5H13.5" stroke="#fff" stroke-width="1"/><rect x="0.5" y="0.5" width="5" height="3.5" fill="#353322" stroke="#fff"/><path d="M3 4V13" stroke="#fff"/></svg>
<svg style="position:absolute;left:2423px;top:1052px;" width="16" height="15" viewBox="0 0 16 15"><path d="M1 5H4L8 1.5V13.5L4 10H1Z" fill="none" stroke="#fff" stroke-width="1"/><path d="M10 5Q12 7.5 10 10M12 3Q15 7.5 12 12" stroke="#fff" stroke-width="1" fill="none"/><path d="M14 1.5Q18 7.5 14 13.5" stroke="#888" stroke-width="1" fill="none"/></svg>
<div style="left:1974.6px;width:1000px;top:1045.29px;font:normal 11.0px/11.0px 'Liberation Sans', sans-serif;color:#ffffff;white-space:pre;text-align:center;">10:58</div>
<div style="left:1975.3000000000002px;width:1000px;top:1062.72px;font:normal 11.2px/11.2px 'Liberation Sans', sans-serif;color:#ffffff;white-space:pre;text-align:center;">18-12-2019</div>
<svg style="position:absolute;left:2519px;top:1051px;" width="17" height="17" viewBox="0 0 17 17"><path d="M0 0H17V12H10L8.5 15L7 12H0Z" fill="#fff"/><path d="M3 3.5H14M3 6H14M3 8.5H11" stroke="#353322" stroke-width="1"/></svg>
<div style="left:2555px;top:1040px;width:1px;height:40px;background:#6b6558;"></div>
</body></html>
